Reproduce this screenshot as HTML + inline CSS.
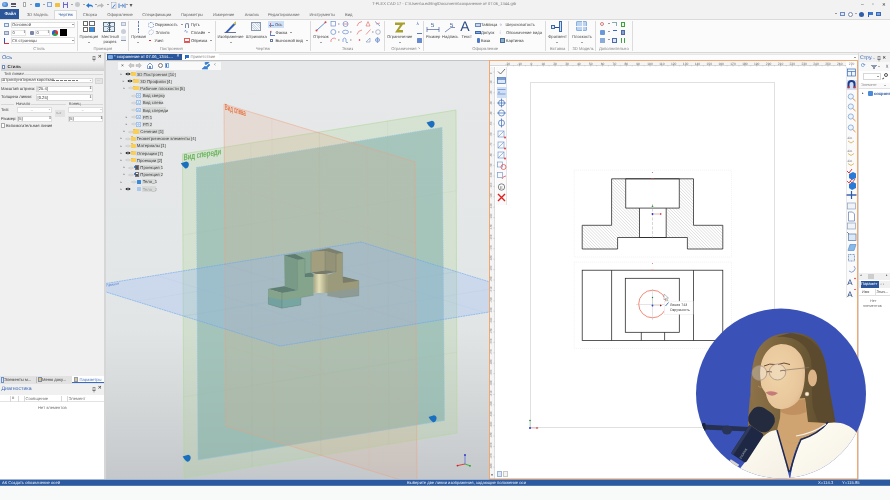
<!DOCTYPE html>
<html><head><meta charset="utf-8">
<style>
*{margin:0;padding:0;box-sizing:border-box}
html,body{width:890px;height:500px;overflow:hidden;background:#f0f0f0;font-family:"Liberation Sans",sans-serif;position:relative}
.a{position:absolute}
.t{position:absolute;white-space:nowrap;font-size:4px;line-height:5px;color:#444}
#root{position:absolute;left:0;top:0;width:890px;height:500px;will-change:transform;text-rendering:geometricPrecision}
</style></head><body><div id="root">
<!-- title bar -->
<div class="a" style="left:0;top:0;width:890px;height:19px;background:#f2f2f2"></div>
<!-- file button -->
<div class="a" style="left:0;top:9px;width:19px;height:10px;background:#2b579a"></div>
<!-- active tab -->
<div class="a" style="left:54px;top:9.5px;width:23px;height:10px;background:#fbfbfb;border:1px solid #dadada;border-bottom:none"></div>
<!-- ribbon -->
<div class="a" style="left:0;top:19px;width:890px;height:34px;background:#fbfbfb;border-top:1px solid #dadada;border-bottom:1px solid #d8d8d8"></div>
<!-- RIBBON START -->
<div class="a" style="left:2px;top:1.5px;width:5.5px;height:5.5px;background:radial-gradient(circle at 40% 40%,#8ec0f0,#1f5fb8);border-radius:50%"></div>
<div class="a" style="left:11px;top:2.5px;width:5px;height:0.8px;background:#556;"></div>
<div class="a" style="left:11px;top:4px;width:5px;height:0.8px;background:#556;"></div>
<div class="a" style="left:11px;top:5.5px;width:5px;height:0.8px;background:#556;"></div>
<div class="a" style="left:22.5px;top:2px;width:3.5px;height:5px;background:#fff;border:0.5px solid #aaa"></div>
<div class="a" style="left:34.5px;top:2.5px;width:5px;height:4.5px;background:#3a8ad8;border-radius:1px"></div>
<div class="a" style="left:46.5px;top:2px;width:5px;height:4.5px;background:#e8eef8;border:0.5px solid #8aa8d8"></div>
<div class="a" style="left:54.5px;top:3px;width:5.5px;height:4px;background:#f0c040;border-radius:0.5px"></div>
<div class="a" style="left:62.5px;top:2px;width:5.5px;height:5.5px;background:#6a68c8;border-radius:0.5px"></div>
<div class="a" style="left:64px;top:2px;width:2.5px;height:2px;background:#e8e8f8;"></div>
<div class="a" style="left:64px;top:5px;width:2.5px;height:2.5px;background:#f0f0f8;"></div>
<div class="a" style="left:74.5px;top:2px;width:5.5px;height:5px;background:#c4c8cc;border-radius:45%"></div>
<div class="a" style="left:29.70px;top:4.10px;width:0;height:0;border-left:1.2px solid transparent;border-right:1.2px solid transparent;border-top:1.32px solid #555"></div>
<div class="a" style="left:42.70px;top:4.10px;width:0;height:0;border-left:1.2px solid transparent;border-right:1.2px solid transparent;border-top:1.32px solid #555"></div>
<div class="a" style="left:70.70px;top:4.10px;width:0;height:0;border-left:1.2px solid transparent;border-right:1.2px solid transparent;border-top:1.32px solid #555"></div>
<div class="a" style="left:82.70px;top:4.10px;width:0;height:0;border-left:1.2px solid transparent;border-right:1.2px solid transparent;border-top:1.32px solid #555"></div>
<div class="a" style="left:94.70px;top:4.10px;width:0;height:0;border-left:1.2px solid transparent;border-right:1.2px solid transparent;border-top:1.32px solid #555"></div>
<div class="a" style="left:106.70px;top:4.10px;width:0;height:0;border-left:1.2px solid transparent;border-right:1.2px solid transparent;border-top:1.32px solid #555"></div>
<div class="a" style="left:125.70px;top:4.10px;width:0;height:0;border-left:1.2px solid transparent;border-right:1.2px solid transparent;border-top:1.32px solid #555"></div>
<svg class="a" style="left:85px;top:1.5px" width="50" height="7"><path d="M1,3.5 L4,1 L4,2.5 Q8,2 8,5.5 Q6.5,3.8 4,4.5 L4,6 Z" fill="#2a78d0"/><path d="M19,3.5 L16,1 L16,2.5 Q12,2 12,5.5 Q13.5,3.8 16,4.5 L16,6 Z" fill="#b8b8b8"/><rect x="26.5" y="0.5" width="4.5" height="6" fill="#eef2f8" stroke="#8a98b0" stroke-width="0.4"/><path d="M27.5,6 L30,2.5" stroke="#2a70c8" stroke-width="0.9"/><rect x="33.5" y="1.5" width="1" height="4.5" fill="#4a80c8"/><path d="M35,3.7 h3.5 M37,2 l2,1.7 l-2,1.7" stroke="#4a80c8" stroke-width="0.8" fill="none"/><rect x="39.5" y="1.5" width="1" height="4.5" fill="#4a80c8"/><path d="M44.5,2 h3 l-1.5,3 z" fill="#555"/></svg>
<div class="t" style="left:372.2px;top:2.23px;font-size:4.06px;line-height:4.87px;color:#7a7a7a;">T-FLEX CAD 17 - C:\Users\a.editing\Documents\сохранение от 07.06_1344.grb</div>
<div class="t" style="left:861px;top:1.65px;font-size:5px;line-height:6.00px;color:#3a3a3a;">–</div>
<div class="t" style="left:872px;top:1.65px;font-size:5px;line-height:6.00px;color:#3a3a3a;">▫</div>
<div class="t" style="left:882px;top:1.96px;font-size:4.5px;line-height:5.40px;color:#3a3a3a;">✕</div>
<div class="t" style="left:4.5px;top:11.18px;font-size:4.3px;line-height:5.16px;color:#fff;"><b>Файл</b></div>
<div class="t" style="left:27px;top:11.58px;font-size:4.15px;line-height:4.98px;color:#666;">3D Модель</div>
<div class="t" style="left:58.5px;top:11.58px;font-size:4.15px;line-height:4.98px;color:#2b579a;">Чертёж</div>
<div class="t" style="left:82.8px;top:11.58px;font-size:4.15px;line-height:4.98px;color:#666;">Сборка</div>
<div class="t" style="left:107.2px;top:11.58px;font-size:4.15px;line-height:4.98px;color:#666;">Оформление</div>
<div class="t" style="left:142.2px;top:11.58px;font-size:4.15px;line-height:4.98px;color:#666;">Спецификации</div>
<div class="t" style="left:180.9px;top:11.58px;font-size:4.15px;line-height:4.98px;color:#666;">Параметры</div>
<div class="t" style="left:212.9px;top:11.58px;font-size:4.15px;line-height:4.98px;color:#666;">Измерение</div>
<div class="t" style="left:244.7px;top:11.58px;font-size:4.15px;line-height:4.98px;color:#666;">Анализ</div>
<div class="t" style="left:268px;top:11.58px;font-size:4.15px;line-height:4.98px;color:#666;">Редактирование</div>
<div class="t" style="left:309.4px;top:11.58px;font-size:4.15px;line-height:4.98px;color:#666;">Инструменты</div>
<div class="t" style="left:345px;top:11.58px;font-size:4.15px;line-height:4.98px;color:#666;">Вид</div>
<div class="a" style="left:835.20px;top:13.40px;width:0;height:0;border-left:1.2px solid transparent;border-right:1.2px solid transparent;border-top:1.32px solid #3a3a3a"></div>
<div class="a" style="left:840px;top:11.5px;width:5px;height:4.5px;background:#dfe8f4;border:0.5px solid #6a8ac0"></div>
<div class="a" style="left:848px;top:11.5px;width:5px;height:5px;background:#fff;border:0.6px solid #7a8aa8;border-radius:50%"></div>
<div class="a" style="left:855.20px;top:13.40px;width:0;height:0;border-left:1.2px solid transparent;border-right:1.2px solid transparent;border-top:1.32px solid #5a5a5a"></div>
<div class="a" style="left:859px;top:11.5px;width:5px;height:5px;background:#2e5ea8;border-radius:50%"></div>
<div class="a" style="left:868px;top:11.5px;width:1px;height:5px;background:#2860c0;"></div>
<div class="a" style="left:869px;top:11.5px;width:4px;height:3px;background:#3a78d0;"></div>
<div class="a" style="left:876px;top:12px;width:5px;height:4px;background:#7aa6e0;border:0.5px solid #3a6ab0"></div>
<div class="a" style="left:76.7px;top:21px;width:0.6px;height:30px;background:#dcdcdc;"></div>
<div class="a" style="left:128.4px;top:21px;width:0.6px;height:30px;background:#dcdcdc;"></div>
<div class="a" style="left:214.5px;top:21px;width:0.6px;height:30px;background:#dcdcdc;"></div>
<div class="a" style="left:309.5px;top:21px;width:0.6px;height:30px;background:#dcdcdc;"></div>
<div class="a" style="left:383.6px;top:21px;width:0.6px;height:30px;background:#dcdcdc;"></div>
<div class="a" style="left:423px;top:21px;width:0.6px;height:30px;background:#dcdcdc;"></div>
<div class="a" style="left:545px;top:21px;width:0.6px;height:30px;background:#dcdcdc;"></div>
<div class="a" style="left:568.4px;top:21px;width:0.6px;height:30px;background:#dcdcdc;"></div>
<div class="a" style="left:595.4px;top:21px;width:0.6px;height:30px;background:#dcdcdc;"></div>
<div class="a" style="left:631.5px;top:21px;width:0.6px;height:30px;background:#dcdcdc;"></div>
<div class="t" style="left:33.3px;top:45.98px;font-size:4.15px;line-height:4.98px;color:#858585;">Стиль</div>
<div class="t" style="left:93.5px;top:45.98px;font-size:4.15px;line-height:4.98px;color:#858585;">Проекция</div>
<div class="t" style="left:159.8px;top:45.98px;font-size:4.15px;line-height:4.98px;color:#858585;">Построения</div>
<div class="t" style="left:255.8px;top:45.98px;font-size:4.15px;line-height:4.98px;color:#858585;">Чертёж</div>
<div class="t" style="left:342px;top:45.98px;font-size:4.15px;line-height:4.98px;color:#858585;">Эскиз</div>
<div class="t" style="left:391.3px;top:45.98px;font-size:4.15px;line-height:4.98px;color:#858585;">Ограничения</div>
<div class="t" style="left:472.3px;top:45.98px;font-size:4.15px;line-height:4.98px;color:#858585;">Оформление</div>
<div class="t" style="left:550px;top:45.98px;font-size:4.15px;line-height:4.98px;color:#858585;">Вставка</div>
<div class="t" style="left:572.5px;top:45.98px;font-size:4.15px;line-height:4.98px;color:#858585;">3D Модель</div>
<div class="t" style="left:598.9px;top:45.98px;font-size:4.15px;line-height:4.98px;color:#858585;">Дополнительно</div>
<div class="t" style="left:417.5px;top:46.38px;font-size:3.5px;line-height:4.20px;color:#999;">↘</div>
<div class="a" style="left:4px;top:22.5px;width:4.5px;height:4.5px;background:#e4ecf6;border:0.5px solid #7a98c8"></div>
<div class="a" style="left:10.5px;top:21.7px;width:64px;height:6.5px;background:#fff;border:0.5px solid #e0e0e0"></div>
<div class="t" style="left:12px;top:22.18px;font-size:4.15px;line-height:4.98px;color:#4a4a4a;">Основной</div>
<div class="a" style="left:72.20px;top:24.40px;width:0;height:0;border-left:1.2px solid transparent;border-right:1.2px solid transparent;border-top:1.32px solid #3a3a3a"></div>
<div class="a" style="left:4px;top:30.5px;width:4.5px;height:4.5px;background:#c8d4e4;border:0.5px solid #8a9ab8"></div>
<div class="a" style="left:11px;top:29.5px;width:15px;height:6.5px;background:#fff;border:0.5px solid #e4e4e4"></div>
<div class="t" style="left:12.5px;top:30.18px;font-size:4.15px;line-height:4.98px;color:#4a4a4a;">0</div>
<div class="t" style="left:23px;top:30.38px;font-size:3.5px;line-height:4.20px;color:#5a5a5a;">⇕</div>
<div class="a" style="left:29.5px;top:31px;width:4px;height:4px;background:#7a86a8;border-radius:1px"></div>
<div class="a" style="left:35px;top:29.5px;width:14.5px;height:6.5px;background:#fff;border:0.5px solid #e4e4e4"></div>
<div class="t" style="left:36.5px;top:30.18px;font-size:4.15px;line-height:4.98px;color:#4a4a4a;">0</div>
<div class="t" style="left:47px;top:30.38px;font-size:3.5px;line-height:4.20px;color:#5a5a5a;">⇕</div>
<div class="a" style="left:52px;top:30px;width:5.5px;height:5.5px;background:conic-gradient(#e03030 0 33%,#30a040 0 66%,#2060d0 0);border-radius:50%"></div>
<div class="a" style="left:59.5px;top:29.4px;width:7px;height:7px;background:#000;"></div>
<div class="a" style="left:4px;top:38px;width:0.7px;height:5px;background:#3050c0;"></div>
<div class="a" style="left:4px;top:42.5px;width:5px;height:0.7px;background:#e03030;"></div>
<div class="a" style="left:10.5px;top:37.4px;width:64px;height:6.9px;background:#fff;border:0.5px solid #e0e0e0"></div>
<div class="t" style="left:12px;top:37.98px;font-size:4.15px;line-height:4.98px;color:#4a4a4a;">СК страницы</div>
<div class="a" style="left:72.20px;top:40.20px;width:0;height:0;border-left:1.2px solid transparent;border-right:1.2px solid transparent;border-top:1.32px solid #3a3a3a"></div>
<div class="a" style="left:83px;top:21.3px;width:5.3px;height:5.1px;background:#fff;border:0.5px solid #6a6a6a"></div>
<div class="a" style="left:89.3px;top:21.3px;width:5.3px;height:5.1px;background:#fff;border:0.5px solid #6a6a6a"></div>
<div class="a" style="left:83px;top:27px;width:5.3px;height:5.1px;background:#fff;border:0.5px solid #6a6a6a"></div>
<div class="a" style="left:89.3px;top:27px;width:5.3px;height:5.1px;background:#fff;border:0.5px solid #6a6a6a"></div>
<div class="a" style="left:89.6px;top:27.3px;width:4.9px;height:4.7px;background:#3a8ad8;border-radius:0.5px"></div>
<div class="t" style="left:79.6px;top:34.18px;font-size:4.15px;line-height:4.98px;color:#4a4a4a;">Проекция</div>
<div class="a" style="left:88.00px;top:42.40px;width:0;height:0;border-left:1.2px solid transparent;border-right:1.2px solid transparent;border-top:1.32px solid #4a4a4a"></div>
<div class="a" style="left:103px;top:21.5px;width:11.7px;height:10px;background:#e4eef4;border:0.5px solid #58707e"></div>
<div class="a" style="left:107px;top:21.5px;width:3.5px;height:10px;background:repeating-linear-gradient(45deg,#8898a8 0 0.4px,transparent 0.4px 1.4px);"></div>
<div class="a" style="left:108.6px;top:21.5px;width:0.5px;height:10px;background:#405868;"></div>
<div class="a" style="left:103px;top:26.3px;width:11.7px;height:0.5px;background:#7890a0;"></div>
<div class="t" style="left:101.5px;top:34.18px;font-size:4.15px;line-height:4.98px;color:#4a4a4a;">Местный</div>
<div class="t" style="left:103.5px;top:38.68px;font-size:4.15px;line-height:4.98px;color:#4a4a4a;">разрез</div>
<div class="a" style="left:120.5px;top:21.5px;width:5px;height:4.5px;background:#dfe6ee;border:0.5px solid #b0bccc"></div>
<div class="a" style="left:120.5px;top:28.5px;width:5px;height:5px;background:#c8d0dc;border-radius:50%"></div>
<div class="a" style="left:120.5px;top:36px;width:5px;height:4.5px;background:#e4e8ee;border-bottom:0.6px solid #8898b0"></div>
<svg class="a" style="left:137px;top:20.5px" width="3" height="12"><line x1="1.5" y1="0" x2="1.5" y2="12" stroke="#3a5a98" stroke-width="0.8" stroke-dasharray="2.5,1"/></svg>
<div class="t" style="left:131.2px;top:34.18px;font-size:4.15px;line-height:4.98px;color:#4a4a4a;">Прямая</div>
<div class="a" style="left:137.20px;top:42.40px;width:0;height:0;border-left:1.2px solid transparent;border-right:1.2px solid transparent;border-top:1.32px solid #4a4a4a"></div>
<div class="a" style="left:148px;top:22px;width:5.5px;height:5.5px;background:transparent;border:0.5px dotted #7a98cc;border-radius:50%"></div>
<div class="t" style="left:154.8px;top:21.98px;font-size:4.15px;line-height:4.98px;color:#3a3a3a;">Окружность</div>
<div class="a" style="left:181.00px;top:24.00px;width:0;height:0;border-left:1.2px solid transparent;border-right:1.2px solid transparent;border-top:1.32px solid #3a3a3a"></div>
<div class="a" style="left:148.3px;top:30.2px;width:5.5px;height:4.5px;background:transparent;border:0.5px dotted #a8b8d8;border-radius:50%;transform:rotate(-40deg)"></div>
<div class="t" style="left:155.5px;top:29.78px;font-size:4.15px;line-height:4.98px;color:#4a4a4a;">Эллипс</div>
<div class="a" style="left:148.5px;top:40px;width:2.5px;height:1px;background:#e03030;"></div>
<div class="t" style="left:154.5px;top:37.78px;font-size:4.15px;line-height:4.98px;color:#3a3a3a;">Узел</div>
<div class="a" style="left:184.5px;top:22.5px;width:4px;height:5px;background:transparent;border:0.6px solid #7a88a0;border-bottom:none;border-radius:2px 2px 0 0"></div>
<div class="t" style="left:190.7px;top:22.18px;font-size:4.15px;line-height:4.98px;color:#3a3a3a;">Путь</div>
<div class="t" style="left:184px;top:28.85px;font-size:5px;line-height:6.00px;color:#3a6ac8;">∿</div>
<div class="t" style="left:190.7px;top:29.78px;font-size:4.15px;line-height:4.98px;color:#3a3a3a;">Сплайн</div>
<div class="a" style="left:207.70px;top:31.80px;width:0;height:0;border-left:1.2px solid transparent;border-right:1.2px solid transparent;border-top:1.32px solid #3a3a3a"></div>
<div class="a" style="left:184px;top:37.8px;width:6px;height:5.5px;background:repeating-linear-gradient(0deg,#e05050 0 0.6px,transparent 0.6px 1.8px);border:0.5px dashed #e06060"></div>
<div class="t" style="left:191px;top:37.78px;font-size:4.15px;line-height:4.98px;color:#3a3a3a;">Обрезка</div>
<div class="a" style="left:209.70px;top:39.80px;width:0;height:0;border-left:1.2px solid transparent;border-right:1.2px solid transparent;border-top:1.32px solid #3a3a3a"></div>
<svg class="a" style="left:224px;top:20.5px" width="13" height="12"><polygon points="1,11.5 9,3 12,0.5 11.5,3.5 3.5,11.5" fill="#3460b8"/><polygon points="9,3 12,0.5 11.5,3.5" fill="#e8c840"/><line x1="0.5" y1="11.5" x2="12" y2="11.5" stroke="#405080" stroke-width="0.8"/></svg>
<div class="t" style="left:217.4px;top:34.18px;font-size:4.15px;line-height:4.98px;color:#4a4a4a;">Изображение</div>
<div class="a" style="left:229.70px;top:42.40px;width:0;height:0;border-left:1.2px solid transparent;border-right:1.2px solid transparent;border-top:1.32px solid #4a4a4a"></div>
<div class="a" style="left:251px;top:22.3px;width:10px;height:8.6px;background:repeating-linear-gradient(45deg,#c8d4e4 0 0.7px,#f4f6fa 0.7px 1.6px);border:0.7px solid #8898b0"></div>
<div class="t" style="left:245.7px;top:34.18px;font-size:4.15px;line-height:4.98px;color:#4a4a4a;">Штриховка</div>
<div class="a" style="left:268px;top:20.8px;width:16px;height:7.3px;background:#cde0f6;"></div>
<div class="a" style="left:270px;top:22.5px;width:0.6px;height:4.5px;background:#e06060;"></div>
<div class="a" style="left:268.5px;top:24.5px;width:5px;height:0.6px;background:#6090d0;"></div>
<div class="t" style="left:275px;top:21.78px;font-size:4.15px;line-height:4.98px;color:#445;">Ось</div>
<div class="a" style="left:269.5px;top:30.5px;width:5px;height:5px;background:transparent;border-left:0.6px solid #6080c0;border-bottom:0.6px solid #6080c0"></div>
<div class="t" style="left:269.5px;top:30.38px;font-size:3.5px;line-height:4.20px;color:#e05050;">✕</div>
<div class="t" style="left:275.5px;top:30.18px;font-size:4.15px;line-height:4.98px;color:#3a3a3a;">Фаска</div>
<div class="a" style="left:289.70px;top:32.20px;width:0;height:0;border-left:1.2px solid transparent;border-right:1.2px solid transparent;border-top:1.32px solid #3a3a3a"></div>
<div class="a" style="left:269.5px;top:38.8px;width:3px;height:3px;background:#fff;border:0.5px solid #6a7a98"></div>
<div class="t" style="left:275.5px;top:38.18px;font-size:4.15px;line-height:4.98px;color:#3a3a3a;">Выносной вид</div>
<div class="a" style="left:305.70px;top:40.20px;width:0;height:0;border-left:1.2px solid transparent;border-right:1.2px solid transparent;border-top:1.32px solid #3a3a3a"></div>
<svg class="a" style="left:315px;top:21px" width="12" height="11"><line x1="1.5" y1="9.5" x2="10.5" y2="1.3" stroke="#3a70d0" stroke-width="0.8"/><circle cx="1.5" cy="9.5" r="1" fill="#e04040"/><circle cx="10.5" cy="1.3" r="1" fill="#e04040"/></svg>
<div class="t" style="left:313px;top:34.18px;font-size:4.15px;line-height:4.98px;color:#4a4a4a;">Отрезок</div>
<div class="a" style="left:319.70px;top:42.40px;width:0;height:0;border-left:1.2px solid transparent;border-right:1.2px solid transparent;border-top:1.32px solid #4a4a4a"></div>
<svg class="a" style="left:330px;top:20px" width="54" height="24" stroke-width="0.6" fill="none"><rect x="1" y="1.5" width="4.5" height="4.5" stroke="#5a7ac8"/><line x1="8" y1="4" x2="9.5" y2="4" stroke="#444"/><circle cx="15.5" cy="4" r="2.5" stroke="#4a7ad0"/><line x1="13" y1="4" x2="18" y2="4" stroke="#e05050"/><path d="M27,6 q1,-4 5,-4.5" stroke="#e05050"/><path d="M36,6 l2,-4.5 l2,4.5 h-4" stroke="#e06060"/><line x1="45" y1="1.5" x2="50" y2="6" stroke="#3a6ac0"/><line x1="46" y1="4" x2="50" y2="3" stroke="#e06060"/><circle cx="3.3" cy="12" r="2.5" stroke="#4a7ad0"/><line x1="8" y1="12" x2="9.5" y2="12" stroke="#444"/><ellipse cx="15.5" cy="12" rx="3" ry="1.8" stroke="#4a7ad0"/><line x1="20" y1="12" x2="21.5" y2="12" stroke="#444"/><path d="M27,14.5 q1,-4 5,-4.5" stroke="#e05050"/><line x1="36" y1="14.5" x2="40.5" y2="9.5" stroke="#e05050"/><line x1="42" y1="12" x2="43.5" y2="12" stroke="#444"/><circle cx="48" cy="12" r="2.3" stroke="#8090b0"/><path d="M1,22 a3,3 0 0 1 5,-3" stroke="#e05050"/><line x1="8" y1="20" x2="9.5" y2="20" stroke="#444"/><path d="M13,22 v-3 q2,-2 3,0 v3 q1,2 2,0" stroke="#4a7ad0"/><line x1="20" y1="20" x2="21.5" y2="20" stroke="#444"/><circle cx="29.5" cy="20" r="0.8" fill="#e03030" stroke="none"/><path d="M36,22 h4 v-4 M36,22 l4,-4" stroke="#7a90c0"/><path d="M47.5,17 v6 M45,20 h5" stroke="#5a80c8"/><circle cx="47.5" cy="20" r="2" stroke="#5a80c8"/></svg>
<svg class="a" style="left:394px;top:21.5px" width="12" height="11"><polygon points="1,3 6,3 1,10.5 9,10.5 9,8 5,8 9,2.5 11,2.5 11,0.5 7,0.5 1,0.5" fill="#a8a02c"/></svg>
<div class="t" style="left:387px;top:34.18px;font-size:4.15px;line-height:4.98px;color:#4a4a4a;">Ограничение</div>
<div class="a" style="left:398.70px;top:42.40px;width:0;height:0;border-left:1.2px solid transparent;border-right:1.2px solid transparent;border-top:1.32px solid #4a4a4a"></div>
<div class="t" style="left:416.5px;top:20.96px;font-size:4.5px;line-height:5.40px;color:#4a6ab0;">⅄</div>
<div class="a" style="left:417px;top:30px;width:5px;height:4px;background:transparent;border-bottom:0.6px solid #5a7ab8"></div>
<div class="a" style="left:416.5px;top:38px;width:5.5px;height:4.5px;background:#6a8ad0;border-radius:0.5px"></div>
<svg class="a" style="left:426px;top:21.5px" width="14" height="11"><text x="5" y="5" font-family="Liberation Sans" font-size="6" fill="#2a4a88">5</text><line x1="1" y1="7.5" x2="13" y2="7.5" stroke="#2a4a88" stroke-width="0.6"/><line x1="1" y1="5" x2="1" y2="10" stroke="#2a4a88" stroke-width="0.6"/><line x1="13" y1="5" x2="13" y2="10" stroke="#2a4a88" stroke-width="0.6"/></svg>
<div class="t" style="left:426px;top:34.18px;font-size:4.15px;line-height:4.98px;color:#4a4a4a;">Размер</div>
<svg class="a" style="left:444px;top:21.5px" width="12" height="11"><text x="6" y="5" font-family="Liberation Sans" font-size="6" fill="#2a4a88">5</text><line x1="1" y1="10" x2="7" y2="5.5" stroke="#2a4a88" stroke-width="0.6"/><line x1="7" y1="5.5" x2="11" y2="5.5" stroke="#2a4a88" stroke-width="0.6"/></svg>
<div class="t" style="left:442px;top:34.18px;font-size:4.15px;line-height:4.98px;color:#4a4a4a;">Надпись</div>
<div class="t" style="left:460.3px;top:18.27px;font-size:14px;line-height:16.80px;color:#2a4a88;">A</div>
<div class="t" style="left:461.5px;top:34.18px;font-size:4.15px;line-height:4.98px;color:#4a4a4a;">Текст</div>
<div class="a" style="left:475px;top:22.7px;width:5.5px;height:4.2px;background:#c8d8ee;border:0.5px solid #6a8ac0"></div>
<div class="t" style="left:481px;top:21.98px;font-size:4.15px;line-height:4.98px;color:#3a3a3a;">Таблица</div>
<div class="a" style="left:475px;top:30.5px;width:5.5px;height:3px;background:#8ab0e0;border:0.5px solid #3a6ab0"></div>
<div class="t" style="left:481px;top:29.98px;font-size:4.15px;line-height:4.98px;color:#3a3a3a;">Допуск</div>
<div class="a" style="left:477px;top:37.8px;width:2.5px;height:5px;background:#4a7ac8;border-radius:1px"></div>
<div class="t" style="left:481px;top:37.98px;font-size:4.15px;line-height:4.98px;color:#3a3a3a;">База</div>
<div class="t" style="left:499.5px;top:21.56px;font-size:4.5px;line-height:5.40px;color:#7a90c8;">⩒</div>
<div class="t" style="left:505.5px;top:21.98px;font-size:4.15px;line-height:4.98px;color:#4a4a4a;">Шероховатость</div>
<div class="t" style="left:499.5px;top:29.56px;font-size:4.5px;line-height:5.40px;color:#5a7ab8;">⫶</div>
<div class="t" style="left:506px;top:29.98px;font-size:4.15px;line-height:4.98px;color:#4a4a4a;">Обозначение вида</div>
<div class="a" style="left:500px;top:38px;width:5px;height:5px;background:#8ab0c8;border:0.5px solid #4a6a98"></div>
<div class="t" style="left:506px;top:37.98px;font-size:4.15px;line-height:4.98px;color:#3a3a3a;">Картинка</div>
<div class="a" style="left:551px;top:24.5px;width:4px;height:4.5px;background:#dde8f4;border:0.6px solid #3a6ab0"></div>
<div class="a" style="left:555px;top:26.5px;width:3.5px;height:0.7px;background:#2a4a88;"></div>
<div class="a" style="left:558.5px;top:21.4px;width:3.5px;height:10.8px;background:#cfe0f4;border:0.6px solid #3a6ab0"></div>
<div class="t" style="left:548.2px;top:34.18px;font-size:4.15px;line-height:4.98px;color:#4a4a4a;">Фрагмент</div>
<div class="a" style="left:555.70px;top:42.40px;width:0;height:0;border-left:1.2px solid transparent;border-right:1.2px solid transparent;border-top:1.32px solid #4a4a4a"></div>
<div class="a" style="left:576px;top:21.4px;width:11.3px;height:10.1px;background:#bcd4f0;border:0.7px solid #8ab0e0;border-radius:1px"></div>
<div class="a" style="left:581.5px;top:21.4px;width:0.7px;height:10.1px;background:#f4f8fc;"></div>
<div class="a" style="left:576px;top:26.2px;width:11.3px;height:0.7px;background:#f4f8fc;"></div>
<div class="t" style="left:572px;top:34.18px;font-size:4.15px;line-height:4.98px;color:#4a4a4a;">Плоскость</div>
<div class="a" style="left:580.70px;top:42.40px;width:0;height:0;border-left:1.2px solid transparent;border-right:1.2px solid transparent;border-top:1.32px solid #4a4a4a"></div>
<div class="a" style="left:600px;top:22px;width:4px;height:4px;background:transparent;border:0.5px solid #d08080;border-radius:50%"></div>
<div class="a" style="left:607.70px;top:23.40px;width:0;height:0;border-left:1.2px solid transparent;border-right:1.2px solid transparent;border-top:1.32px solid #3a3a3a"></div>
<div class="a" style="left:612px;top:22px;width:5px;height:4px;background:transparent;border-top:0.5px solid #8aa;border-right:0.5px solid #8aa"></div>
<div class="a" style="left:620.5px;top:22px;width:4px;height:4.5px;background:#e8f4e8;border:0.5px solid #40a040"></div>
<div class="a" style="left:600px;top:30px;width:5px;height:4.5px;background:#6a98d8;border-radius:1px"></div>
<div class="a" style="left:607.70px;top:31.40px;width:0;height:0;border-left:1.2px solid transparent;border-right:1.2px solid transparent;border-top:1.32px solid #3a3a3a"></div>
<div class="a" style="left:613px;top:30px;width:4px;height:3.5px;background:transparent;border-top:0.6px solid #3a6ac0"></div>
<div class="a" style="left:620.5px;top:30px;width:4px;height:4.5px;background:#8aa0c8;border:0.5px solid #4a6aa8"></div>
<div class="a" style="left:600px;top:38px;width:5px;height:4.5px;background:#8aaad8;"></div>
<div class="a" style="left:607.70px;top:39.40px;width:0;height:0;border-left:1.2px solid transparent;border-right:1.2px solid transparent;border-top:1.32px solid #3a3a3a"></div>
<div class="a" style="left:612px;top:38px;width:4.5px;height:4.5px;background:#dde8f4;border:0.5px solid #4a6ab0"></div>
<div class="a" style="left:620.5px;top:38px;width:4.5px;height:4.5px;background:transparent;border-left:0.8px solid #40a040;border-right:0.8px solid #40a040"></div>
<!-- RIBBON END -->
<!-- left panel -->
<div class="a" style="left:0;top:53px;width:105px;height:426px;background:#f0f0f0"></div>
<div class="a" style="left:104px;top:53px;width:2px;height:426px;background:#d6d6d6"></div>
<!-- LEFT START -->
<div class="a" style="left:0px;top:53px;width:104px;height:10px;background:#f0f0f0;"></div>
<div class="t" style="left:2px;top:54.58px;font-size:5.6px;line-height:6.72px;color:#3a6ab8;">Ось</div>
<svg class="a" style="left:91.5px;top:55.5px" width="4" height="6"><rect x="1" y="0.3" width="2" height="3" fill="none" stroke="#555" stroke-width="0.5"/><line x1="0.3" y1="3.4" x2="3.7" y2="3.4" stroke="#555" stroke-width="0.5"/><line x1="2" y1="3.4" x2="2" y2="5.5" stroke="#555" stroke-width="0.5"/></svg>
<div class="t" style="left:97.8px;top:55.07px;font-size:4.8px;line-height:5.76px;color:#222;">✕</div>
<div class="a" style="left:0.5px;top:63px;width:103.5px;height:7.5px;background:linear-gradient(180deg,#ececec,#cfcfcf);"></div>
<div class="a" style="left:2px;top:64.5px;width:3px;height:4px;background:#fff;border:0.5px solid #6a8ac0"></div>
<div class="t" style="left:7.5px;top:64.02px;font-size:4.4px;line-height:5.28px;color:#333;"><b>Стиль</b></div>
<div class="t" style="left:4px;top:71.18px;font-size:4.15px;line-height:4.98px;color:#4a4a4a;">Тип линии</div>
<div class="a" style="left:23px;top:74px;width:80px;height:0.5px;background:#d8d8d8;"></div>
<div class="a" style="left:0.5px;top:77.5px;width:92px;height:5.4px;background:#fff;border:0.5px solid #dadada"></div>
<div class="t" style="left:1.5px;top:77.48px;font-size:4.15px;line-height:4.98px;color:#3a3a3a;">Штрихпунктирная короткая</div>
<div class="a" style="left:52px;top:80px;width:26px;height:0.7px;background:repeating-linear-gradient(90deg,#777 0 3px,transparent 3px 4px);"></div>
<div class="t" style="left:89px;top:77.68px;font-size:3.5px;line-height:4.20px;color:#4a4a4a;">⌄</div>
<div class="a" style="left:94.5px;top:77.5px;width:8.5px;height:6px;background:#e4e4e4;border:0.5px solid #d4d4d4"></div>
<div class="t" style="left:97px;top:78.08px;font-size:3.5px;line-height:4.20px;color:#5a5a5a;">...</div>
<div class="t" style="left:1px;top:85.98px;font-size:4.15px;line-height:4.98px;color:#3a3a3a;">Масштаб штриха:</div>
<div class="a" style="left:36px;top:85.5px;width:56.5px;height:6.5px;background:#fff;border:0.5px solid #dadada"></div>
<div class="t" style="left:37.5px;top:85.98px;font-size:4.15px;line-height:4.98px;color:#3a3a3a;">[25.4]</div>
<div class="t" style="left:89px;top:85.99px;font-size:3.8px;line-height:4.56px;color:#4a4a4a;">⇕</div>
<div class="t" style="left:1px;top:94.18px;font-size:4.15px;line-height:4.98px;color:#3a3a3a;">Толщина линии:</div>
<div class="a" style="left:36px;top:94.3px;width:56.5px;height:6.3px;background:#fff;border:0.5px solid #dadada"></div>
<div class="t" style="left:37.5px;top:94.58px;font-size:4.15px;line-height:4.98px;color:#3a3a3a;">[0.25]</div>
<div class="t" style="left:89px;top:94.59px;font-size:3.8px;line-height:4.56px;color:#4a4a4a;">⇕</div>
<div class="a" style="left:1px;top:103.5px;width:13px;height:0.5px;background:#d8d8d8;"></div>
<div class="t" style="left:16px;top:100.58px;font-size:4.15px;line-height:4.98px;color:#4a4a4a;">Начало</div>
<div class="a" style="left:31px;top:103.5px;width:35px;height:0.5px;background:#d8d8d8;"></div>
<div class="t" style="left:69px;top:100.58px;font-size:4.15px;line-height:4.98px;color:#4a4a4a;">Конец</div>
<div class="a" style="left:81px;top:103.5px;width:22px;height:0.5px;background:#d8d8d8;"></div>
<div class="t" style="left:1px;top:107.18px;font-size:4.15px;line-height:4.98px;color:#3a3a3a;">Тип:</div>
<div class="a" style="left:16.5px;top:107.2px;width:35px;height:5.6px;background:#fff;border:0.5px solid #dedede"></div>
<div class="t" style="left:30px;top:107.58px;font-size:3.5px;line-height:4.20px;color:#aaa;">→</div>
<div class="t" style="left:48px;top:107.38px;font-size:3.5px;line-height:4.20px;color:#5a5a5a;">⌄</div>
<div class="a" style="left:54.5px;top:110px;width:10.5px;height:7px;background:#e2e2e2;"></div>
<div class="t" style="left:56px;top:111.08px;font-size:3.5px;line-height:4.20px;color:#5a5a5a;">&lt;-&gt;</div>
<div class="a" style="left:67.5px;top:107.2px;width:35.5px;height:5.6px;background:#fff;border:0.5px solid #dedede"></div>
<div class="t" style="left:81px;top:107.58px;font-size:3.5px;line-height:4.20px;color:#aaa;">←</div>
<div class="t" style="left:99.5px;top:107.38px;font-size:3.5px;line-height:4.20px;color:#5a5a5a;">⌄</div>
<div class="t" style="left:1px;top:115.78px;font-size:4.15px;line-height:4.98px;color:#3a3a3a;">Размер:</div>
<div class="a" style="left:16.5px;top:115.5px;width:35px;height:6px;background:#fff;border:0.5px solid #dedede"></div>
<div class="t" style="left:18px;top:115.78px;font-size:4.15px;line-height:4.98px;color:#3a3a3a;">[5]</div>
<div class="t" style="left:48.5px;top:115.79px;font-size:3.8px;line-height:4.56px;color:#4a4a4a;">⇕</div>
<div class="a" style="left:67.5px;top:115.5px;width:35.5px;height:6px;background:#fff;border:0.5px solid #dedede"></div>
<div class="t" style="left:69px;top:115.78px;font-size:4.15px;line-height:4.98px;color:#3a3a3a;">[5]</div>
<div class="t" style="left:100px;top:115.79px;font-size:3.8px;line-height:4.56px;color:#4a4a4a;">⇕</div>
<div class="a" style="left:0.5px;top:123px;width:4.5px;height:5px;background:#fff;border:0.5px solid #aaa"></div>
<div class="t" style="left:6px;top:122.98px;font-size:4.15px;line-height:4.98px;color:#3a3a3a;">Вспомогательная линия</div>
<div class="a" style="left:0px;top:376px;width:104px;height:8px;background:#e2e2e2;"></div>
<div class="a" style="left:1px;top:377px;width:2.5px;height:5.5px;background:#dfe8f4;border:0.5px solid #6a90c8"></div>
<div class="t" style="left:4px;top:377.38px;font-size:4.15px;line-height:4.98px;color:#3a3a3a;">Элементы м...</div>
<div class="a" style="left:35.5px;top:377px;width:0.5px;height:6px;background:#bbb;"></div>
<div class="a" style="left:37.5px;top:376.8px;width:4px;height:5.5px;background:#f0c850;border:0.5px solid #7a8ab8"></div>
<div class="t" style="left:42px;top:377.38px;font-size:4.15px;line-height:4.98px;color:#3a3a3a;">Меню доку...</div>
<div class="a" style="left:72px;top:376px;width:32px;height:7.4px;background:#fff;border-bottom:0.8px solid #3a6ac0"></div>
<div class="a" style="left:73.5px;top:377px;width:4.5px;height:5px;background:#e8c860;border:0.5px solid #8a9ac0"></div>
<div class="t" style="left:79.5px;top:377.38px;font-size:4.15px;line-height:4.98px;color:#4a78c8;">Параметры</div>
<div class="a" style="left:0px;top:384px;width:104px;height:10px;background:#f0f0f0;"></div>
<div class="t" style="left:1.5px;top:385.83px;font-size:5.2px;line-height:6.24px;color:#3a6ab8;">Диагностика</div>
<svg class="a" style="left:91.8px;top:386.5px" width="4" height="6"><rect x="1" y="0.3" width="2" height="3" fill="none" stroke="#555" stroke-width="0.5"/><line x1="0.3" y1="3.4" x2="3.7" y2="3.4" stroke="#555" stroke-width="0.5"/><line x1="2" y1="3.4" x2="2" y2="5.5" stroke="#555" stroke-width="0.5"/></svg>
<div class="t" style="left:97.8px;top:385.97px;font-size:4.8px;line-height:5.76px;color:#222;">✕</div>
<div class="a" style="left:0px;top:394.5px;width:104px;height:7.8px;background:#fff;border-bottom:0.5px solid #e4e4e4"></div>
<div class="a" style="left:9.5px;top:395.5px;width:0.5px;height:6px;background:#d8d8d8;"></div>
<div class="a" style="left:17.5px;top:395.5px;width:0.5px;height:6px;background:#d8d8d8;"></div>
<div class="a" style="left:23.5px;top:395.5px;width:0.5px;height:6px;background:#d8d8d8;"></div>
<div class="a" style="left:60.5px;top:395.5px;width:0.5px;height:6px;background:#d8d8d8;"></div>
<div class="a" style="left:67px;top:395.5px;width:0.5px;height:6px;background:#d8d8d8;"></div>
<div class="t" style="left:12px;top:395.77px;font-size:4px;line-height:4.80px;color:#5a5a5a;">#</div>
<div class="t" style="left:25.5px;top:395.68px;font-size:4.15px;line-height:4.98px;color:#707070;">Сообщение</div>
<div class="t" style="left:68.5px;top:395.68px;font-size:4.15px;line-height:4.98px;color:#707070;">Элемент</div>
<div class="a" style="left:0px;top:402.3px;width:104px;height:76.7px;background:#fff;"></div>
<div class="t" style="left:38px;top:405.18px;font-size:4.15px;line-height:4.98px;color:#707070;">Нет элементов</div>
<!-- LEFT END -->
<!-- 3D view -->
<div class="a" style="left:106px;top:60px;width:384px;height:419px;background:linear-gradient(180deg,#e7e8e9 0%,#e4e7e7 45%,#e1e5e6 64%,#d4d8d9 81%,#c4c8cb 100%)"></div>

<!-- 3D scene -->
<svg class="a" style="left:0;top:0" width="890" height="500" viewBox="0 0 890 500">
<defs><clipPath id="c3"><rect x="106" y="60" width="383" height="419"/></clipPath>
<linearGradient id="cyl" x1="0" x2="1" y1="0" y2="0"><stop offset="0" stop-color="#a9a784"/><stop offset="0.4" stop-color="#e2dfb8"/><stop offset="1" stop-color="#9d9a78"/></linearGradient>
</defs>
<g clip-path="url(#c3)">
<!-- green outer plane -->
<polygon points="182.5,154 456,110 457,433 184,478" fill="#a8d090" fill-opacity="0.25" stroke="#b0d8a0" stroke-width="0.6"/>
<!-- inner teal -->
<polygon points="196.5,167.5 442,127.5 444.5,420.5 198,460" fill="#75aaa5" fill-opacity="0.5" stroke="#98c4e0" stroke-width="0.8" stroke-dasharray="1.4,0.9"/>
<!-- orange plane -->
<polygon points="224,104 415,162 417,485 226,426" fill="#e0a888" fill-opacity="0.2" stroke="#f0a080" stroke-width="0.6" stroke-opacity="0.8"/>
<!-- GRID START --><line x1="250.9" y1="143.0" x2="252.2" y2="466.8" stroke="#9ab890" stroke-opacity="0.22" stroke-width="0.5"/><line x1="182.9" y1="235.0" x2="456.2" y2="190.8" stroke="#9ab890" stroke-opacity="0.22" stroke-width="0.5"/><line x1="319.2" y1="132.0" x2="320.5" y2="455.5" stroke="#9ab890" stroke-opacity="0.22" stroke-width="0.5"/><line x1="183.2" y1="316.0" x2="456.5" y2="271.5" stroke="#9ab890" stroke-opacity="0.22" stroke-width="0.5"/><line x1="387.6" y1="121.0" x2="388.8" y2="444.2" stroke="#9ab890" stroke-opacity="0.22" stroke-width="0.5"/><line x1="183.6" y1="397.0" x2="456.8" y2="352.2" stroke="#9ab890" stroke-opacity="0.22" stroke-width="0.5"/><line x1="271.8" y1="118.5" x2="273.8" y2="440.8" stroke="#e0a090" stroke-opacity="0.22" stroke-width="0.5"/><line x1="224.5" y1="184.5" x2="415.5" y2="242.8" stroke="#e0a090" stroke-opacity="0.22" stroke-width="0.5"/><line x1="319.5" y1="133.0" x2="321.5" y2="455.5" stroke="#e0a090" stroke-opacity="0.22" stroke-width="0.5"/><line x1="225.0" y1="265.0" x2="416.0" y2="323.5" stroke="#e0a090" stroke-opacity="0.22" stroke-width="0.5"/><line x1="367.2" y1="147.5" x2="369.2" y2="470.2" stroke="#e0a090" stroke-opacity="0.22" stroke-width="0.5"/><line x1="225.5" y1="345.5" x2="416.5" y2="404.2" stroke="#e0a090" stroke-opacity="0.22" stroke-width="0.5"/><line x1="156.2" y1="275.3" x2="348.2" y2="334.9" stroke="#8ab0e0" stroke-opacity="0.2" stroke-width="0.5"/><line x1="136.0" y1="301.3" x2="409.0" y2="256.9" stroke="#8ab0e0" stroke-opacity="0.2" stroke-width="0.5"/><line x1="224.5" y1="264.2" x2="416.5" y2="323.8" stroke="#8ab0e0" stroke-opacity="0.2" stroke-width="0.5"/><line x1="184.0" y1="316.2" x2="457.0" y2="271.8" stroke="#8ab0e0" stroke-opacity="0.2" stroke-width="0.5"/><line x1="292.8" y1="253.1" x2="484.8" y2="312.7" stroke="#8ab0e0" stroke-opacity="0.2" stroke-width="0.5"/><line x1="232.0" y1="331.1" x2="505.0" y2="286.7" stroke="#8ab0e0" stroke-opacity="0.2" stroke-width="0.5"/><!-- GRID END -->
<!-- blue plane -->
<polygon points="88,286.4 361,242 553,301.6 280,346" fill="#88b1fb" fill-opacity="0.25" stroke="#6aa6ee" stroke-width="0.6" stroke-dasharray="2,0.6"/><text x="0" y="0" transform="matrix(0.95 -0.155 0 1 106.5 286.5)" font-family="Liberation Sans" font-size="3.2" fill="#4a7ad0">Горизонт</text>
</g>
<!-- 3D part -->
<g>
<polygon points="295,254 311,251.5 311,272.5 305,273.5 305,258.6" fill="#86a894"/>
<polygon points="284.2,255.4 297.4,259.8 297.6,290.2 284.7,286.3" fill="#7a9a88"/>
<polygon points="297.4,259.8 305,258.6 305,277 313.5,275.5 313.5,295.3 301,297.5 301,305 281.9,308.2 281.9,293 297.6,290.2" fill="#84a48c"/>
<polygon points="284.2,255.4 295,254 305,258.6 297.4,259.8" fill="#5d7c6e"/>
<polygon points="305,273.5 311,272.5 314,274.5 313.5,277 305,277" fill="#5f7f73"/>
<polygon points="268.4,289.1 284.7,286.3 297.6,290.2 281.9,293" fill="#5f7f72"/>
<polygon points="268.4,289.1 281.9,293 281.9,308.2 268.4,304.3" fill="#86a48c"/>
<polygon points="268.4,297 281.9,300 281.9,308.2 268.4,304.3" fill="#72a1a0"/>
<polygon points="281.9,300 301,298 301,305 281.9,308.2" fill="#77a5a2"/>
<line x1="281.9" y1="293" x2="281.9" y2="308.2" stroke="#5a7a70" stroke-width="0.4"/>
<polygon points="311,251.5 325,251 325,270.5 311,272.5" fill="#a29e7e"/>
<polygon points="325,251 336,254 336,272 325,270.5" fill="#949277"/>
<polygon points="336,254 342.6,252.6 342.6,277 358.8,280.7 358.8,288.5 327.4,293 327.4,275 336,272" fill="#9b9a7a"/>
<polygon points="311,251.5 329,248.2 342.6,252.6 336,254 325,251" fill="#7e806c"/>
<polygon points="311,272.5 325,270.5 336,272 320,275" fill="#777a66"/>
<polygon points="342.6,277 344,276.7 358.8,280.7 343,283" fill="#7b7d6b"/>
<polygon points="327.4,292.5 358.8,288 358.8,295.8 339.7,298 327.4,296" fill="#8e9b94"/>
<rect x="313.5" y="274" width="14" height="19" fill="url(#cyl)"/>
<line x1="297.4" y1="259.8" x2="297.6" y2="290.2" stroke="#617f70" stroke-width="0.4"/>
<line x1="336" y1="254" x2="336" y2="272" stroke="#6f705e" stroke-width="0.4"/>
</g>
<!-- markers -->
<g stroke="#4a5a50" stroke-opacity="0.5" stroke-width="0.35" fill="none"><path d="M284.2,255.4 L329,248.2 L342.6,252.6 L342.6,277 L358.8,280.7 L358.8,295.8 L339.7,298"/><path d="M268.4,289.1 L284.7,286.3 M268.4,289.1 L268.4,304.3 L281.9,308.2 L301,305 L301,297.5 L313.5,295.3"/><path d="M297.4,259.8 L305,258.6 L305,277 M311,251.5 L311,272.5 M325,251 L325,270.5 L336,272 M336,254 L342.6,252.6"/></g>
<!-- markers --><path transform="translate(426.5,120.8)" d="M0,1.7 L5.5,0 Q8.5,0.7 8,3.7 Q7,7.2 4.5,7 Q2,5.2 0,1.7 Z" fill="#1a6fbf"/><path transform="translate(180.8,161.6)" d="M0,1.7 L5.5,0 Q8.5,0.7 8,3.7 Q7,7.2 4.5,7 Q2,5.2 0,1.7 Z" fill="#1a6fbf"/><path transform="translate(182.6,454.8)" d="M0,1.7 L5.5,0 Q8.5,0.7 8,3.7 Q7,7.2 4.5,7 Q2,5.2 0,1.7 Z" fill="#1a6fbf"/><path transform="translate(428.5,415.2)" d="M0,1.7 L5.5,0 Q8.5,0.7 8,3.7 Q7,7.2 4.5,7 Q2,5.2 0,1.7 Z" fill="#1a6fbf"/>
<!-- labels -->
<text x="0" y="0" transform="matrix(0.764 -0.122 0 1 183.5 160.2)" font-family="Liberation Sans" font-size="8.3" fill="#5aae48" stroke="#5aae48" stroke-width="0.15">Вид спереди</text>
<text x="0" y="0" transform="matrix(0.526 0.16 0 1 224.8 109.6)" font-family="Liberation Sans" font-size="8.3" fill="#e8703e" stroke="#e8703e" stroke-width="0.15">Вид слева</text>
<!-- axis -->
<g stroke-width="1"><line x1="465" y1="464" x2="465" y2="455" stroke="#7080e0"/><circle cx="465" cy="455" r="0.9" fill="#2030c0"/><line x1="465" y1="464" x2="457.5" y2="465.6" stroke="#e04040"/><circle cx="457.5" cy="465.6" r="0.9" fill="#d02020"/><line x1="465" y1="464" x2="470" y2="465.8" stroke="#40b040"/><circle cx="470" cy="465.8" r="0.9" fill="#20a020"/></g>
</svg>

<!-- doc tabs -->
<div class="a" style="left:106px;top:53.5px;width:752px;height:7px;background:#fdfdfd;border-top:0.5px solid #e8e8e8;border-bottom:0.7px solid #c4c4c4"></div>
<div class="a" style="left:107px;top:54px;width:75px;height:6px;background:#2b579a"></div>
<div class="a" style="left:108px;top:54.6px;width:5px;height:4.8px;background:#7aa9e0;border-radius:1px"></div>
<div class="t" style="left:114px;top:54.3px;font-size:4.2px;line-height:5.6px;color:#fff">* сохранение от 07.06_1344....</div>
<div class="t" style="left:176.5px;top:54.3px;font-size:5px;line-height:5.6px;color:#fff">×</div>
<div class="a" style="left:183px;top:54px;width:36px;height:6px;background:#fff"></div>
<div class="a" style="left:185px;top:55px;width:1px;height:4px;background:#2060c0"></div>
<div class="a" style="left:186px;top:55px;width:3px;height:2.5px;background:#2a70d0"></div>
<div class="t" style="left:190.5px;top:54.3px;font-size:4.2px;line-height:5.6px;color:#8a8a8a">Приветствие</div>
<!-- tree toolbar -->
<div class="a" style="left:118px;top:61.5px;width:103px;height:8px;background:rgba(255,255,255,0.75)"></div>
<div class="t" style="left:121px;top:62.5px;font-size:5px;line-height:6px;color:#333">×</div>
<svg class="a" style="left:128px;top:62px" width="50" height="7"><path d="M0.5,3.5 L3,1 V2.5 H6 V4.5 H3 V6 Z" fill="#c8c8c8" stroke="#999" stroke-width="0.3"/><path d="M13.5,3.5 L11,1 V2.5 H8 V4.5 H11 V6 Z" fill="#c8c8c8" stroke="#999" stroke-width="0.3"/><path d="M19.5,3.5 L22,1 L24.5,3.5 V6.5 H19.5 Z" fill="#fff" stroke="#2a60b0" stroke-width="0.6"/><rect x="21.3" y="4" width="1.4" height="2.5" fill="#2a60b0"/></svg>

<div class="a" style="left:157.5px;top:62.8px;width:5px;height:5px;border:0.6px solid #777;border-radius:50%"></div>
<div class="a" style="left:164.8px;top:62.8px;width:4.2px;height:5px;border:0.5px solid #8ab0e0;background:#f0f6fc"></div><div class="a" style="left:166.4px;top:64px;width:1px;height:2.5px;background:#3a70c0"></div>
<svg class="a" style="left:200.5px;top:61.5px" width="10" height="8"><path d="M1,7 L4,4 L5,5 L8,2 L9,3 L6,6 L7,7 Z M5,3 a2,2 0 1 1 3,-2" fill="#3a80d0" stroke="#3a80d0" stroke-width="0.6"/></svg>
<div class="t" style="left:214px;top:62.2px;font-size:6px;line-height:7px;color:#777">‹</div>
<!-- TREE START -->
<div class="a" style="left:135.8px;top:71.4px;width:38.5px;height:5.2px;background:rgba(200,200,200,0.45)"></div>
<div class="t" style="left:136.8px;top:71.5px;font-size:4.3px;line-height:5.2px;color:#3c3c3c">3D Построения [10]</div>
<div class="t" style="left:120.5px;top:71.6px;font-size:3px;line-height:5px;color:#777">▸</div>
<svg class="a" style="left:124.5px;top:72.0px" width="6" height="4"><path d="M0.3,2 Q3,-0.6 5.7,2 Q3,4.6 0.3,2Z" fill="#1a1a1a"/><circle cx="3" cy="2" r="0.7" fill="#fff"/></svg>
<div class="a" style="left:130.5px;top:71.9px;width:5.6px;height:4.2px;background:#f8cf5a;border-radius:0.4px"></div>
<div class="a" style="left:130.5px;top:71.5px;width:2.4px;height:1px;background:#f0c040"></div>
<div class="a" style="left:139.3px;top:78.6px;width:30.5px;height:5.2px;background:rgba(200,200,200,0.45)"></div>
<div class="t" style="left:140.3px;top:78.7px;font-size:4.3px;line-height:5.2px;color:#3c3c3c">3D Профили [4]</div>
<div class="t" style="left:122.7px;top:78.8px;font-size:3px;line-height:5px;color:#777">▸</div>
<svg class="a" style="left:127.3px;top:79.2px" width="6" height="4"><path d="M0.3,2 Q3,-0.6 5.7,2 Q3,4.6 0.3,2Z" fill="#1a1a1a"/><circle cx="3" cy="2" r="0.7" fill="#fff"/></svg>
<div class="a" style="left:133.0px;top:79.1px;width:5.6px;height:4.2px;background:#f8cf5a;border-radius:0.4px"></div>
<div class="a" style="left:133.0px;top:78.7px;width:2.4px;height:1px;background:#f0c040"></div>
<div class="a" style="left:139.3px;top:85.8px;width:44.5px;height:5.2px;background:rgba(200,200,200,0.45)"></div>
<div class="t" style="left:140.3px;top:85.9px;font-size:4.3px;line-height:5.2px;color:#3c3c3c">Рабочие плоскости [5]</div>
<div class="t" style="left:123.4px;top:86.0px;font-size:3px;line-height:5px;color:#777">▸</div>
<svg class="a" style="left:127.8px;top:86.4px" width="6" height="4"><path d="M0.5,2 Q3,0 5.5,2 Q3,4 0.5,2Z" fill="none" stroke="#b8b8b8" stroke-width="0.45"/></svg>
<div class="a" style="left:133.0px;top:86.3px;width:5.6px;height:4.2px;background:#f8cf5a;border-radius:0.4px"></div>
<div class="a" style="left:133.0px;top:85.9px;width:2.4px;height:1px;background:#f0c040"></div>
<div class="a" style="left:141.7px;top:93.0px;width:22.5px;height:5.2px;background:rgba(200,200,200,0.45)"></div>
<div class="t" style="left:142.7px;top:93.1px;font-size:4.3px;line-height:5.2px;color:#3c3c3c">Вид сверху</div>
<svg class="a" style="left:130.5px;top:93.6px" width="6" height="4"><path d="M0.5,2 Q3,0 5.5,2 Q3,4 0.5,2Z" fill="none" stroke="#b8b8b8" stroke-width="0.45"/></svg>
<div class="a" style="left:135.6px;top:93.2px;width:5.8px;height:4.8px;background:#e4eefa;border:0.5px solid #a0c0e8"></div>
<div class="a" style="left:138.2px;top:93.2px;width:0.5px;height:4.8px;background:#b0cdf0"></div>
<div class="a" style="left:135.6px;top:95.4px;width:5.8px;height:0.5px;background:#b0cdf0"></div>
<div class="a" style="left:141.7px;top:100.2px;width:20.5px;height:5.2px;background:rgba(200,200,200,0.45)"></div>
<div class="t" style="left:142.7px;top:100.3px;font-size:4.3px;line-height:5.2px;color:#3c3c3c">Вид слева</div>
<svg class="a" style="left:130.5px;top:100.8px" width="6" height="4"><path d="M0.5,2 Q3,0 5.5,2 Q3,4 0.5,2Z" fill="none" stroke="#b8b8b8" stroke-width="0.45"/></svg>
<div class="a" style="left:135.6px;top:100.4px;width:5.8px;height:4.8px;background:#e4eefa;border:0.5px solid #a0c0e8"></div>
<div class="a" style="left:138.2px;top:100.4px;width:0.5px;height:4.8px;background:#b0cdf0"></div>
<div class="a" style="left:135.6px;top:102.6px;width:5.8px;height:0.5px;background:#b0cdf0"></div>
<div class="a" style="left:141.7px;top:107.4px;width:24.5px;height:5.2px;background:rgba(200,200,200,0.45)"></div>
<div class="t" style="left:142.7px;top:107.5px;font-size:4.3px;line-height:5.2px;color:#3c3c3c">Вид спереди</div>
<svg class="a" style="left:130.5px;top:108.0px" width="6" height="4"><path d="M0.5,2 Q3,0 5.5,2 Q3,4 0.5,2Z" fill="none" stroke="#b8b8b8" stroke-width="0.45"/></svg>
<div class="a" style="left:135.6px;top:107.6px;width:5.8px;height:4.8px;background:#e4eefa;border:0.5px solid #a0c0e8"></div>
<div class="a" style="left:138.2px;top:107.6px;width:0.5px;height:4.8px;background:#b0cdf0"></div>
<div class="a" style="left:135.6px;top:109.8px;width:5.8px;height:0.5px;background:#b0cdf0"></div>
<div class="a" style="left:141.7px;top:114.5px;width:10.5px;height:5.2px;background:rgba(200,200,200,0.45)"></div>
<div class="t" style="left:142.7px;top:114.6px;font-size:4.3px;line-height:5.2px;color:#3c3c3c">РП 1</div>
<div class="t" style="left:125.7px;top:114.7px;font-size:3px;line-height:5px;color:#777">▸</div>
<svg class="a" style="left:130.5px;top:115.1px" width="6" height="4"><path d="M0.5,2 Q3,0 5.5,2 Q3,4 0.5,2Z" fill="none" stroke="#b8b8b8" stroke-width="0.45"/></svg>
<div class="a" style="left:135.6px;top:114.7px;width:5.8px;height:4.8px;background:#e4eefa;border:0.5px solid #a0c0e8"></div>
<div class="a" style="left:138.2px;top:114.7px;width:0.5px;height:4.8px;background:#b0cdf0"></div>
<div class="a" style="left:135.6px;top:116.9px;width:5.8px;height:0.5px;background:#b0cdf0"></div>
<div class="a" style="left:141.7px;top:121.7px;width:10.5px;height:5.2px;background:rgba(200,200,200,0.45)"></div>
<div class="t" style="left:142.7px;top:121.8px;font-size:4.3px;line-height:5.2px;color:#3c3c3c">РП 2</div>
<div class="t" style="left:125.7px;top:121.9px;font-size:3px;line-height:5px;color:#777">▸</div>
<svg class="a" style="left:130.5px;top:122.3px" width="6" height="4"><path d="M0.5,2 Q3,0 5.5,2 Q3,4 0.5,2Z" fill="none" stroke="#b8b8b8" stroke-width="0.45"/></svg>
<div class="a" style="left:135.6px;top:121.9px;width:5.8px;height:4.8px;background:#e4eefa;border:0.5px solid #a0c0e8"></div>
<div class="a" style="left:138.2px;top:121.9px;width:0.5px;height:4.8px;background:#b0cdf0"></div>
<div class="a" style="left:135.6px;top:124.1px;width:5.8px;height:0.5px;background:#b0cdf0"></div>
<div class="a" style="left:139.3px;top:128.9px;width:24.5px;height:5.2px;background:rgba(200,200,200,0.45)"></div>
<div class="t" style="left:140.3px;top:129.0px;font-size:4.3px;line-height:5.2px;color:#3c3c3c">Сечения [1]</div>
<div class="t" style="left:123.4px;top:129.1px;font-size:3px;line-height:5px;color:#777">▸</div>
<svg class="a" style="left:127.8px;top:129.5px" width="6" height="4"><path d="M0.5,2 Q3,0 5.5,2 Q3,4 0.5,2Z" fill="none" stroke="#b8b8b8" stroke-width="0.45"/></svg>
<div class="a" style="left:133.0px;top:129.4px;width:5.6px;height:4.2px;background:#f8cf5a;border-radius:0.4px"></div>
<div class="a" style="left:133.0px;top:129.0px;width:2.4px;height:1px;background:#f0c040"></div>
<div class="a" style="left:135.8px;top:136.1px;width:56.5px;height:5.2px;background:rgba(200,200,200,0.45)"></div>
<div class="t" style="left:136.8px;top:136.2px;font-size:4.3px;line-height:5.2px;color:#3c3c3c">Геометрические элементы [4]</div>
<div class="t" style="left:120.5px;top:136.3px;font-size:3px;line-height:5px;color:#777">▸</div>
<svg class="a" style="left:125.0px;top:136.7px" width="6" height="4"><path d="M0.5,2 Q3,0 5.5,2 Q3,4 0.5,2Z" fill="none" stroke="#b8b8b8" stroke-width="0.45"/></svg>
<div class="a" style="left:130.5px;top:136.6px;width:5.6px;height:4.2px;background:#f8cf5a;border-radius:0.4px"></div>
<div class="a" style="left:130.5px;top:136.2px;width:2.4px;height:1px;background:#f0c040"></div>
<div class="a" style="left:135.8px;top:143.3px;width:28.5px;height:5.2px;background:rgba(200,200,200,0.45)"></div>
<div class="t" style="left:136.8px;top:143.4px;font-size:4.3px;line-height:5.2px;color:#3c3c3c">Материалы [1]</div>
<div class="t" style="left:120.5px;top:143.5px;font-size:3px;line-height:5px;color:#777">▸</div>
<svg class="a" style="left:125.0px;top:143.9px" width="6" height="4"><path d="M0.5,2 Q3,0 5.5,2 Q3,4 0.5,2Z" fill="none" stroke="#b8b8b8" stroke-width="0.45"/></svg>
<div class="a" style="left:130.5px;top:143.8px;width:5.6px;height:4.2px;background:#f8cf5a;border-radius:0.4px"></div>
<div class="a" style="left:130.5px;top:143.4px;width:2.4px;height:1px;background:#f0c040"></div>
<div class="a" style="left:135.8px;top:150.5px;width:26.5px;height:5.2px;background:rgba(200,200,200,0.45)"></div>
<div class="t" style="left:136.8px;top:150.6px;font-size:4.3px;line-height:5.2px;color:#3c3c3c">Операции [7]</div>
<div class="t" style="left:120.5px;top:150.7px;font-size:3px;line-height:5px;color:#777">▸</div>
<svg class="a" style="left:124.5px;top:151.1px" width="6" height="4"><path d="M0.3,2 Q3,-0.6 5.7,2 Q3,4.6 0.3,2Z" fill="#1a1a1a"/><circle cx="3" cy="2" r="0.7" fill="#fff"/></svg>
<div class="a" style="left:130.5px;top:151.0px;width:5.6px;height:4.2px;background:#f8cf5a;border-radius:0.4px"></div>
<div class="a" style="left:130.5px;top:150.6px;width:2.4px;height:1px;background:#f0c040"></div>
<div class="a" style="left:135.8px;top:157.7px;width:26.5px;height:5.2px;background:rgba(200,200,200,0.45)"></div>
<div class="t" style="left:136.8px;top:157.8px;font-size:4.3px;line-height:5.2px;color:#3c3c3c">Проекции [2]</div>
<div class="t" style="left:120.5px;top:157.9px;font-size:3px;line-height:5px;color:#777">▸</div>
<svg class="a" style="left:125.0px;top:158.3px" width="6" height="4"><path d="M0.5,2 Q3,0 5.5,2 Q3,4 0.5,2Z" fill="none" stroke="#b8b8b8" stroke-width="0.45"/></svg>
<div class="a" style="left:130.5px;top:158.2px;width:5.6px;height:4.2px;background:#f8cf5a;border-radius:0.4px"></div>
<div class="a" style="left:130.5px;top:157.8px;width:2.4px;height:1px;background:#f0c040"></div>
<div class="a" style="left:139.3px;top:164.9px;width:22.5px;height:5.2px;background:rgba(200,200,200,0.45)"></div>
<div class="t" style="left:140.3px;top:165.0px;font-size:4.3px;line-height:5.2px;color:#3c3c3c">Проекция 1</div>
<div class="t" style="left:123.4px;top:165.1px;font-size:3px;line-height:5px;color:#777">▸</div>
<svg class="a" style="left:127.8px;top:165.5px" width="6" height="4"><path d="M0.5,2 Q3,0 5.5,2 Q3,4 0.5,2Z" fill="none" stroke="#b8b8b8" stroke-width="0.45"/></svg>
<div class="a" style="left:134.5px;top:165.0px;width:4.5px;height:5px;background:#f4f4f4;border:0.5px solid #777"></div>
<div class="a" style="left:135.5px;top:166.4px;width:2.5px;height:2.5px;border:0.5px solid #555"></div>
<div class="a" style="left:133.5px;top:165.5px;width:2.2px;height:2.2px;background:#2a60b0;border-radius:50%"></div>
<div class="a" style="left:139.3px;top:172.1px;width:22.5px;height:5.2px;background:rgba(200,200,200,0.45)"></div>
<div class="t" style="left:140.3px;top:172.2px;font-size:4.3px;line-height:5.2px;color:#3c3c3c">Проекция 2</div>
<div class="t" style="left:123.4px;top:172.3px;font-size:3px;line-height:5px;color:#777">▸</div>
<svg class="a" style="left:127.8px;top:172.7px" width="6" height="4"><path d="M0.5,2 Q3,0 5.5,2 Q3,4 0.5,2Z" fill="none" stroke="#b8b8b8" stroke-width="0.45"/></svg>
<div class="a" style="left:134.5px;top:172.2px;width:4.5px;height:5px;background:#f4f4f4;border:0.5px solid #777"></div>
<div class="a" style="left:135.5px;top:173.6px;width:2.5px;height:2.5px;border:0.5px solid #555"></div>
<div class="a" style="left:133.5px;top:172.7px;width:2.2px;height:2.2px;background:#2a60b0;border-radius:50%"></div>
<div class="a" style="left:141.7px;top:179.3px;width:14.5px;height:5.2px;background:rgba(200,200,200,0.45)"></div>
<div class="t" style="left:142.7px;top:179.4px;font-size:4.3px;line-height:5.2px;color:#3c3c3c">Тело_1</div>
<div class="t" style="left:120.5px;top:179.5px;font-size:3px;line-height:5px;color:#777">▸</div>
<svg class="a" style="left:130.5px;top:179.9px" width="6" height="4"><path d="M0.5,2 Q3,0 5.5,2 Q3,4 0.5,2Z" fill="none" stroke="#b8b8b8" stroke-width="0.45"/></svg>
<div class="a" style="left:136.5px;top:179.8px;width:4.5px;height:4.2px;background:#3a88d8;border-radius:0.5px"></div>
<div class="a" style="left:141.7px;top:186.4px;width:14.5px;height:5.2px;background:rgba(200,200,200,0.45)"></div>
<div class="t" style="left:142.7px;top:186.5px;font-size:4.3px;line-height:5.2px;color:#a0a0a0">Тело_2</div>
<div class="t" style="left:120.5px;top:186.6px;font-size:3px;line-height:5px;color:#777">▸</div>
<svg class="a" style="left:124.5px;top:187.0px" width="6" height="4"><path d="M0.3,2 Q3,-0.6 5.7,2 Q3,4.6 0.3,2Z" fill="#1a1a1a"/><circle cx="3" cy="2" r="0.7" fill="#fff"/></svg>
<div class="a" style="left:136.5px;top:186.9px;width:4.5px;height:4.2px;background:#a8c8ec;border-radius:0.5px"></div>
<!-- TREE END -->
<!-- DRAW START -->
<div class="a" style="left:489px;top:60px;width:369px;height:419px;background:#fff;border:1.2px solid #f2a86e;border-bottom:none"></div>
<div class="a" style="left:490.2px;top:61.2px;width:355.8px;height:5.3px;background:#f5f5f5;border-bottom:0.5px solid #d8d8d8"></div>
<div class="a" style="left:490.2px;top:66.5px;width:5px;height:412.5px;background:#f5f5f5;border-right:0.5px solid #dcdcdc"></div>
<svg class="a" style="left:0;top:0" width="890" height="500"><line x1="507.7" y1="63.5" x2="507.7" y2="66.5" stroke="#999" stroke-width="0.4"/><line x1="513.6" y1="65" x2="513.6" y2="66.5" stroke="#aaa" stroke-width="0.3"/><text x="507.7" y="64.6" font-family="Liberation Sans" font-size="3.3" fill="#777" text-anchor="middle">-20</text><line x1="519.5" y1="63.5" x2="519.5" y2="66.5" stroke="#999" stroke-width="0.4"/><line x1="525.5" y1="65" x2="525.5" y2="66.5" stroke="#aaa" stroke-width="0.3"/><text x="519.5" y="64.6" font-family="Liberation Sans" font-size="3.3" fill="#777" text-anchor="middle">-10</text><line x1="531.4" y1="63.5" x2="531.4" y2="66.5" stroke="#999" stroke-width="0.4"/><line x1="537.3" y1="65" x2="537.3" y2="66.5" stroke="#aaa" stroke-width="0.3"/><text x="531.4" y="64.6" font-family="Liberation Sans" font-size="3.3" fill="#777" text-anchor="middle">0</text><line x1="543.3" y1="63.5" x2="543.3" y2="66.5" stroke="#999" stroke-width="0.4"/><line x1="549.2" y1="65" x2="549.2" y2="66.5" stroke="#aaa" stroke-width="0.3"/><text x="543.3" y="64.6" font-family="Liberation Sans" font-size="3.3" fill="#777" text-anchor="middle">10</text><line x1="555.1" y1="63.5" x2="555.1" y2="66.5" stroke="#999" stroke-width="0.4"/><line x1="561.0" y1="65" x2="561.0" y2="66.5" stroke="#aaa" stroke-width="0.3"/><text x="555.1" y="64.6" font-family="Liberation Sans" font-size="3.3" fill="#777" text-anchor="middle">20</text><line x1="567.0" y1="63.5" x2="567.0" y2="66.5" stroke="#999" stroke-width="0.4"/><line x1="572.9" y1="65" x2="572.9" y2="66.5" stroke="#aaa" stroke-width="0.3"/><text x="567.0" y="64.6" font-family="Liberation Sans" font-size="3.3" fill="#777" text-anchor="middle">30</text><line x1="578.8" y1="63.5" x2="578.8" y2="66.5" stroke="#999" stroke-width="0.4"/><line x1="584.8" y1="65" x2="584.8" y2="66.5" stroke="#aaa" stroke-width="0.3"/><text x="578.8" y="64.6" font-family="Liberation Sans" font-size="3.3" fill="#777" text-anchor="middle">40</text><line x1="590.7" y1="63.5" x2="590.7" y2="66.5" stroke="#999" stroke-width="0.4"/><line x1="596.6" y1="65" x2="596.6" y2="66.5" stroke="#aaa" stroke-width="0.3"/><text x="590.7" y="64.6" font-family="Liberation Sans" font-size="3.3" fill="#777" text-anchor="middle">50</text><line x1="602.6" y1="63.5" x2="602.6" y2="66.5" stroke="#999" stroke-width="0.4"/><line x1="608.5" y1="65" x2="608.5" y2="66.5" stroke="#aaa" stroke-width="0.3"/><text x="602.6" y="64.6" font-family="Liberation Sans" font-size="3.3" fill="#777" text-anchor="middle">60</text><line x1="614.4" y1="63.5" x2="614.4" y2="66.5" stroke="#999" stroke-width="0.4"/><line x1="620.3" y1="65" x2="620.3" y2="66.5" stroke="#aaa" stroke-width="0.3"/><text x="614.4" y="64.6" font-family="Liberation Sans" font-size="3.3" fill="#777" text-anchor="middle">70</text><line x1="626.3" y1="63.5" x2="626.3" y2="66.5" stroke="#999" stroke-width="0.4"/><line x1="632.2" y1="65" x2="632.2" y2="66.5" stroke="#aaa" stroke-width="0.3"/><text x="626.3" y="64.6" font-family="Liberation Sans" font-size="3.3" fill="#777" text-anchor="middle">80</text><line x1="638.1" y1="63.5" x2="638.1" y2="66.5" stroke="#999" stroke-width="0.4"/><line x1="644.1" y1="65" x2="644.1" y2="66.5" stroke="#aaa" stroke-width="0.3"/><text x="638.1" y="64.6" font-family="Liberation Sans" font-size="3.3" fill="#777" text-anchor="middle">90</text><line x1="650.0" y1="63.5" x2="650.0" y2="66.5" stroke="#999" stroke-width="0.4"/><line x1="655.9" y1="65" x2="655.9" y2="66.5" stroke="#aaa" stroke-width="0.3"/><text x="650.0" y="64.6" font-family="Liberation Sans" font-size="3.3" fill="#777" text-anchor="middle">100</text><line x1="661.9" y1="63.5" x2="661.9" y2="66.5" stroke="#999" stroke-width="0.4"/><line x1="667.8" y1="65" x2="667.8" y2="66.5" stroke="#aaa" stroke-width="0.3"/><text x="661.9" y="64.6" font-family="Liberation Sans" font-size="3.3" fill="#777" text-anchor="middle">110</text><line x1="673.7" y1="63.5" x2="673.7" y2="66.5" stroke="#999" stroke-width="0.4"/><line x1="679.6" y1="65" x2="679.6" y2="66.5" stroke="#aaa" stroke-width="0.3"/><text x="673.7" y="64.6" font-family="Liberation Sans" font-size="3.3" fill="#777" text-anchor="middle">120</text><line x1="685.6" y1="63.5" x2="685.6" y2="66.5" stroke="#999" stroke-width="0.4"/><line x1="691.5" y1="65" x2="691.5" y2="66.5" stroke="#aaa" stroke-width="0.3"/><text x="685.6" y="64.6" font-family="Liberation Sans" font-size="3.3" fill="#777" text-anchor="middle">130</text><line x1="697.4" y1="63.5" x2="697.4" y2="66.5" stroke="#999" stroke-width="0.4"/><line x1="703.4" y1="65" x2="703.4" y2="66.5" stroke="#aaa" stroke-width="0.3"/><text x="697.4" y="64.6" font-family="Liberation Sans" font-size="3.3" fill="#777" text-anchor="middle">140</text><line x1="709.3" y1="63.5" x2="709.3" y2="66.5" stroke="#999" stroke-width="0.4"/><line x1="715.2" y1="65" x2="715.2" y2="66.5" stroke="#aaa" stroke-width="0.3"/><text x="709.3" y="64.6" font-family="Liberation Sans" font-size="3.3" fill="#777" text-anchor="middle">150</text><line x1="721.2" y1="63.5" x2="721.2" y2="66.5" stroke="#999" stroke-width="0.4"/><line x1="727.1" y1="65" x2="727.1" y2="66.5" stroke="#aaa" stroke-width="0.3"/><text x="721.2" y="64.6" font-family="Liberation Sans" font-size="3.3" fill="#777" text-anchor="middle">160</text><line x1="733.0" y1="63.5" x2="733.0" y2="66.5" stroke="#999" stroke-width="0.4"/><line x1="738.9" y1="65" x2="738.9" y2="66.5" stroke="#aaa" stroke-width="0.3"/><text x="733.0" y="64.6" font-family="Liberation Sans" font-size="3.3" fill="#777" text-anchor="middle">170</text><line x1="744.9" y1="63.5" x2="744.9" y2="66.5" stroke="#999" stroke-width="0.4"/><line x1="750.8" y1="65" x2="750.8" y2="66.5" stroke="#aaa" stroke-width="0.3"/><text x="744.9" y="64.6" font-family="Liberation Sans" font-size="3.3" fill="#777" text-anchor="middle">180</text><line x1="756.7" y1="63.5" x2="756.7" y2="66.5" stroke="#999" stroke-width="0.4"/><line x1="762.7" y1="65" x2="762.7" y2="66.5" stroke="#aaa" stroke-width="0.3"/><text x="756.7" y="64.6" font-family="Liberation Sans" font-size="3.3" fill="#777" text-anchor="middle">190</text><line x1="768.6" y1="63.5" x2="768.6" y2="66.5" stroke="#999" stroke-width="0.4"/><line x1="774.5" y1="65" x2="774.5" y2="66.5" stroke="#aaa" stroke-width="0.3"/><text x="768.6" y="64.6" font-family="Liberation Sans" font-size="3.3" fill="#777" text-anchor="middle">200</text><line x1="780.5" y1="63.5" x2="780.5" y2="66.5" stroke="#999" stroke-width="0.4"/><line x1="786.4" y1="65" x2="786.4" y2="66.5" stroke="#aaa" stroke-width="0.3"/><text x="780.5" y="64.6" font-family="Liberation Sans" font-size="3.3" fill="#777" text-anchor="middle">210</text><line x1="792.3" y1="63.5" x2="792.3" y2="66.5" stroke="#999" stroke-width="0.4"/><line x1="798.2" y1="65" x2="798.2" y2="66.5" stroke="#aaa" stroke-width="0.3"/><text x="792.3" y="64.6" font-family="Liberation Sans" font-size="3.3" fill="#777" text-anchor="middle">220</text><line x1="804.2" y1="63.5" x2="804.2" y2="66.5" stroke="#999" stroke-width="0.4"/><line x1="810.1" y1="65" x2="810.1" y2="66.5" stroke="#aaa" stroke-width="0.3"/><text x="804.2" y="64.6" font-family="Liberation Sans" font-size="3.3" fill="#777" text-anchor="middle">230</text><line x1="816.0" y1="63.5" x2="816.0" y2="66.5" stroke="#999" stroke-width="0.4"/><line x1="822.0" y1="65" x2="822.0" y2="66.5" stroke="#aaa" stroke-width="0.3"/><text x="816.0" y="64.6" font-family="Liberation Sans" font-size="3.3" fill="#777" text-anchor="middle">240</text><line x1="827.9" y1="63.5" x2="827.9" y2="66.5" stroke="#999" stroke-width="0.4"/><line x1="833.8" y1="65" x2="833.8" y2="66.5" stroke="#aaa" stroke-width="0.3"/><text x="827.9" y="64.6" font-family="Liberation Sans" font-size="3.3" fill="#777" text-anchor="middle">250</text><line x1="839.8" y1="63.5" x2="839.8" y2="66.5" stroke="#999" stroke-width="0.4"/><line x1="845.7" y1="65" x2="845.7" y2="66.5" stroke="#aaa" stroke-width="0.3"/><text x="839.8" y="64.6" font-family="Liberation Sans" font-size="3.3" fill="#777" text-anchor="middle">260</text><line x1="851.6" y1="63.5" x2="851.6" y2="66.5" stroke="#999" stroke-width="0.4"/><line x1="857.5" y1="65" x2="857.5" y2="66.5" stroke="#aaa" stroke-width="0.3"/><text x="851.6" y="64.6" font-family="Liberation Sans" font-size="3.3" fill="#777" text-anchor="middle">270</text><line x1="493" y1="72.0" x2="495" y2="72.0" stroke="#aaa" stroke-width="0.3"/><text x="492" y="74.0" font-family="Liberation Sans" font-size="3" fill="#888" transform="rotate(-90 492 74.0)">0</text><line x1="493" y1="82.4" x2="495" y2="82.4" stroke="#aaa" stroke-width="0.3"/><text x="492" y="84.4" font-family="Liberation Sans" font-size="3" fill="#888" transform="rotate(-90 492 84.4)">-10</text><line x1="493" y1="92.8" x2="495" y2="92.8" stroke="#aaa" stroke-width="0.3"/><text x="492" y="94.8" font-family="Liberation Sans" font-size="3" fill="#888" transform="rotate(-90 492 94.8)">-20</text><line x1="493" y1="103.2" x2="495" y2="103.2" stroke="#aaa" stroke-width="0.3"/><text x="492" y="105.2" font-family="Liberation Sans" font-size="3" fill="#888" transform="rotate(-90 492 105.2)">-30</text><line x1="493" y1="113.6" x2="495" y2="113.6" stroke="#aaa" stroke-width="0.3"/><text x="492" y="115.6" font-family="Liberation Sans" font-size="3" fill="#888" transform="rotate(-90 492 115.6)">-40</text><line x1="493" y1="124.0" x2="495" y2="124.0" stroke="#aaa" stroke-width="0.3"/><text x="492" y="126.0" font-family="Liberation Sans" font-size="3" fill="#888" transform="rotate(-90 492 126.0)">-50</text><line x1="493" y1="134.4" x2="495" y2="134.4" stroke="#aaa" stroke-width="0.3"/><text x="492" y="136.4" font-family="Liberation Sans" font-size="3" fill="#888" transform="rotate(-90 492 136.4)">-60</text><line x1="493" y1="144.8" x2="495" y2="144.8" stroke="#aaa" stroke-width="0.3"/><text x="492" y="146.8" font-family="Liberation Sans" font-size="3" fill="#888" transform="rotate(-90 492 146.8)">-70</text><line x1="493" y1="155.2" x2="495" y2="155.2" stroke="#aaa" stroke-width="0.3"/><text x="492" y="157.2" font-family="Liberation Sans" font-size="3" fill="#888" transform="rotate(-90 492 157.2)">-80</text><line x1="493" y1="165.6" x2="495" y2="165.6" stroke="#aaa" stroke-width="0.3"/><text x="492" y="167.6" font-family="Liberation Sans" font-size="3" fill="#888" transform="rotate(-90 492 167.6)">-90</text><line x1="493" y1="176.0" x2="495" y2="176.0" stroke="#aaa" stroke-width="0.3"/><text x="492" y="178.0" font-family="Liberation Sans" font-size="3" fill="#888" transform="rotate(-90 492 178.0)">-100</text><line x1="493" y1="186.4" x2="495" y2="186.4" stroke="#aaa" stroke-width="0.3"/><text x="492" y="188.4" font-family="Liberation Sans" font-size="3" fill="#888" transform="rotate(-90 492 188.4)">-110</text><line x1="493" y1="196.8" x2="495" y2="196.8" stroke="#aaa" stroke-width="0.3"/><text x="492" y="198.8" font-family="Liberation Sans" font-size="3" fill="#888" transform="rotate(-90 492 198.8)">-120</text><line x1="493" y1="207.2" x2="495" y2="207.2" stroke="#aaa" stroke-width="0.3"/><text x="492" y="209.2" font-family="Liberation Sans" font-size="3" fill="#888" transform="rotate(-90 492 209.2)">-130</text><line x1="493" y1="217.6" x2="495" y2="217.6" stroke="#aaa" stroke-width="0.3"/><text x="492" y="219.6" font-family="Liberation Sans" font-size="3" fill="#888" transform="rotate(-90 492 219.6)">-140</text><line x1="493" y1="228.0" x2="495" y2="228.0" stroke="#aaa" stroke-width="0.3"/><text x="492" y="230.0" font-family="Liberation Sans" font-size="3" fill="#888" transform="rotate(-90 492 230.0)">-150</text><line x1="493" y1="238.4" x2="495" y2="238.4" stroke="#aaa" stroke-width="0.3"/><text x="492" y="240.4" font-family="Liberation Sans" font-size="3" fill="#888" transform="rotate(-90 492 240.4)">-160</text><line x1="493" y1="248.8" x2="495" y2="248.8" stroke="#aaa" stroke-width="0.3"/><text x="492" y="250.8" font-family="Liberation Sans" font-size="3" fill="#888" transform="rotate(-90 492 250.8)">-170</text><line x1="493" y1="259.2" x2="495" y2="259.2" stroke="#aaa" stroke-width="0.3"/><text x="492" y="261.2" font-family="Liberation Sans" font-size="3" fill="#888" transform="rotate(-90 492 261.2)">-180</text><line x1="493" y1="269.6" x2="495" y2="269.6" stroke="#aaa" stroke-width="0.3"/><text x="492" y="271.6" font-family="Liberation Sans" font-size="3" fill="#888" transform="rotate(-90 492 271.6)">-190</text><line x1="493" y1="280.0" x2="495" y2="280.0" stroke="#aaa" stroke-width="0.3"/><text x="492" y="282.0" font-family="Liberation Sans" font-size="3" fill="#888" transform="rotate(-90 492 282.0)">-200</text><line x1="493" y1="290.4" x2="495" y2="290.4" stroke="#aaa" stroke-width="0.3"/><text x="492" y="292.4" font-family="Liberation Sans" font-size="3" fill="#888" transform="rotate(-90 492 292.4)">-210</text><line x1="493" y1="300.8" x2="495" y2="300.8" stroke="#aaa" stroke-width="0.3"/><text x="492" y="302.8" font-family="Liberation Sans" font-size="3" fill="#888" transform="rotate(-90 492 302.8)">-220</text><line x1="493" y1="311.2" x2="495" y2="311.2" stroke="#aaa" stroke-width="0.3"/><text x="492" y="313.2" font-family="Liberation Sans" font-size="3" fill="#888" transform="rotate(-90 492 313.2)">-230</text><line x1="493" y1="321.6" x2="495" y2="321.6" stroke="#aaa" stroke-width="0.3"/><text x="492" y="323.6" font-family="Liberation Sans" font-size="3" fill="#888" transform="rotate(-90 492 323.6)">-240</text><line x1="493" y1="332.0" x2="495" y2="332.0" stroke="#aaa" stroke-width="0.3"/><text x="492" y="334.0" font-family="Liberation Sans" font-size="3" fill="#888" transform="rotate(-90 492 334.0)">-250</text><line x1="493" y1="342.4" x2="495" y2="342.4" stroke="#aaa" stroke-width="0.3"/><text x="492" y="344.4" font-family="Liberation Sans" font-size="3" fill="#888" transform="rotate(-90 492 344.4)">-260</text><line x1="493" y1="352.8" x2="495" y2="352.8" stroke="#aaa" stroke-width="0.3"/><text x="492" y="354.8" font-family="Liberation Sans" font-size="3" fill="#888" transform="rotate(-90 492 354.8)">-270</text><line x1="493" y1="363.2" x2="495" y2="363.2" stroke="#aaa" stroke-width="0.3"/><text x="492" y="365.2" font-family="Liberation Sans" font-size="3" fill="#888" transform="rotate(-90 492 365.2)">-280</text><line x1="493" y1="373.6" x2="495" y2="373.6" stroke="#aaa" stroke-width="0.3"/><text x="492" y="375.6" font-family="Liberation Sans" font-size="3" fill="#888" transform="rotate(-90 492 375.6)">-290</text><line x1="493" y1="384.0" x2="495" y2="384.0" stroke="#aaa" stroke-width="0.3"/><text x="492" y="386.0" font-family="Liberation Sans" font-size="3" fill="#888" transform="rotate(-90 492 386.0)">-300</text><line x1="493" y1="394.4" x2="495" y2="394.4" stroke="#aaa" stroke-width="0.3"/><text x="492" y="396.4" font-family="Liberation Sans" font-size="3" fill="#888" transform="rotate(-90 492 396.4)">-310</text><line x1="493" y1="404.8" x2="495" y2="404.8" stroke="#aaa" stroke-width="0.3"/><text x="492" y="406.8" font-family="Liberation Sans" font-size="3" fill="#888" transform="rotate(-90 492 406.8)">-320</text><line x1="493" y1="415.2" x2="495" y2="415.2" stroke="#aaa" stroke-width="0.3"/><text x="492" y="417.2" font-family="Liberation Sans" font-size="3" fill="#888" transform="rotate(-90 492 417.2)">-330</text><line x1="493" y1="425.6" x2="495" y2="425.6" stroke="#aaa" stroke-width="0.3"/><text x="492" y="427.6" font-family="Liberation Sans" font-size="3" fill="#888" transform="rotate(-90 492 427.6)">-340</text><line x1="493" y1="436.0" x2="495" y2="436.0" stroke="#aaa" stroke-width="0.3"/><text x="492" y="438.0" font-family="Liberation Sans" font-size="3" fill="#888" transform="rotate(-90 492 438.0)">-350</text><line x1="493" y1="446.4" x2="495" y2="446.4" stroke="#aaa" stroke-width="0.3"/><text x="492" y="448.4" font-family="Liberation Sans" font-size="3" fill="#888" transform="rotate(-90 492 448.4)">-360</text><line x1="493" y1="456.8" x2="495" y2="456.8" stroke="#aaa" stroke-width="0.3"/><text x="492" y="458.8" font-family="Liberation Sans" font-size="3" fill="#888" transform="rotate(-90 492 458.8)">-370</text><line x1="493" y1="467.2" x2="495" y2="467.2" stroke="#aaa" stroke-width="0.3"/><text x="492" y="469.2" font-family="Liberation Sans" font-size="3" fill="#888" transform="rotate(-90 492 469.2)">-380</text></svg>
<div class="t" style="left:490.6px;top:473.89px;font-size:3px;line-height:3.60px;color:#333;">▼</div>
<div class="a" style="left:495.5px;top:66.5px;width:11.5px;height:138px;background:#fafafa;border-right:0.5px solid #e4e4e4"></div>
<div class="a" style="left:496.5px;top:87px;width:10px;height:10.5px;background:#cfe0f6;"></div>
<svg class="a" style="left:495px;top:66px" width="13" height="140" fill="none" stroke-width="0.7"><path d="M3,5.5 l2.5,2.5 l4.5,-5" stroke="#666" stroke-width="0.9"/><rect x="2.5" y="11.5" width="8" height="6" fill="#dde8f4" stroke="#3a6ab8"/><line x1="2.5" y1="13" x2="10.5" y2="13" stroke="#3a6ab8" stroke-width="1.2"/><line x1="2.5" y1="23.5" x2="10.5" y2="23.5" stroke="#5a80c0"/><line x1="2.5" y1="28" x2="10.5" y2="28" stroke="#5a80c0"/><text x="3" y="27" font-size="2.5" fill="#3a6ab8" stroke="none">H</text><circle cx="6.5" cy="37" r="3" stroke="#3a6ab8"/><line x1="2" y1="37" x2="11" y2="37" stroke="#3a6ab8"/><line x1="6.5" y1="32.5" x2="6.5" y2="41.5" stroke="#3a6ab8"/><circle cx="6.5" cy="47" r="3" stroke="#3a6ab8"/><line x1="2" y1="47" x2="11" y2="47" stroke="#3a6ab8"/><circle cx="6.5" cy="57" r="3" stroke="#3a6ab8"/><line x1="6.5" y1="52.5" x2="6.5" y2="61.5" stroke="#3a6ab8"/><rect x="3" y="65" width="6" height="6" stroke="#7a9ad0"/><line x1="3" y1="71" x2="9" y2="65" stroke="#7a9ad0"/><circle cx="10" cy="71.5" r="0.9" fill="#e03030" stroke="none"/><rect x="3" y="76" width="6" height="6" stroke="#7a9ad0"/><line x1="3" y1="82" x2="9" y2="76" stroke="#7a9ad0"/><circle cx="10" cy="82.5" r="0.9" fill="#e03030" stroke="none"/><rect x="3" y="86" width="6" height="6" stroke="#7a9ad0"/><line x1="3" y1="92" x2="9" y2="86" stroke="#7a9ad0"/><circle cx="10" cy="92.5" r="0.9" fill="#e03030" stroke="none"/><rect x="2.5" y="96" width="5" height="5" stroke="#7a9ad0"/><circle cx="8.5" cy="101" r="2.5" stroke="#e04040"/><rect x="2.5" y="106.5" width="5" height="5" stroke="#7a9ad0"/><path d="M7,113 q1,-3 4,-3" stroke="#e04040"/><circle cx="6.5" cy="121" r="3.2" stroke="#555"/><text x="5" y="122.5" font-size="4" fill="#555" stroke="none">E</text><path d="M3,128 l7,7 M10,128 l-7,7" stroke="#e02020" stroke-width="1.4"/></svg>
<div class="a" style="left:496.5px;top:470.5px;width:5px;height:6.5px;background:#dce8f6;border:0.5px solid #9ab4dc"></div>
<div class="a" style="left:502.5px;top:470.5px;width:5px;height:6.5px;background:#f4f4f4;border:0.5px solid #c8c8c8"></div>
<div class="a" style="left:530px;top:81.6px;width:245.4px;height:346px;background:transparent;border:0.6px solid #e0e0e0"></div>
<div class="a" style="left:846px;top:66.5px;width:11px;height:231px;background:#fafafa;border-left:0.5px solid #e8e8e8"></div>
<div class="a" style="left:846.5px;top:79.8px;width:10px;height:10.5px;background:#cfe0f6;"></div>
<svg class="a" style="left:845px;top:66px" width="13" height="232" fill="none" stroke-width="0.7"><rect x="2.5" y="3" width="8" height="7" stroke="#3a6ab8" fill="#eef4fb"/><line x1="2.5" y1="5.5" x2="10.5" y2="5.5" stroke="#3a6ab8"/><line x1="6.5" y1="5.5" x2="6.5" y2="10" stroke="#3a6ab8"/><path d="M3.5,22 v-4 a3,3 0 0 1 6,0 v4" stroke="#203a8a" stroke-width="2"/><rect x="2.6" y="20.5" width="2" height="1.8" fill="#e03030" stroke="none"/><rect x="8.5" y="20.5" width="2" height="1.8" fill="#e03030" stroke="none"/><circle cx="5.8" cy="30.5" r="2.6" stroke="#6a9ad8" fill="#eef4fb"/><line x1="7.8" y1="32.5" x2="10.5" y2="35.0" stroke="#e09040" stroke-width="1"/><circle cx="5.8" cy="40.5" r="2.6" stroke="#6a9ad8" fill="#eef4fb"/><line x1="7.8" y1="42.5" x2="10.5" y2="45.0" stroke="#e09040" stroke-width="1"/><circle cx="5.8" cy="50.5" r="2.6" stroke="#6a9ad8" fill="#eef4fb"/><line x1="7.8" y1="52.5" x2="10.5" y2="55.0" stroke="#e09040" stroke-width="1"/><circle cx="5.8" cy="61.5" r="2.6" stroke="#6a9ad8" fill="#eef4fb"/><line x1="7.8" y1="63.5" x2="10.5" y2="66.0" stroke="#e09040" stroke-width="1"/><text x="2.5" y="73" font-size="3" fill="#666" stroke="none">dim</text><path d="M3,75 l3,2 l3,-2" stroke="#d0a030"/><text x="2.5" y="85.5" font-size="3" fill="#666" stroke="none">dim</text><path d="M3,87.5 l3,2 l3,-2" stroke="#d0a030"/><text x="2.5" y="95.5" font-size="3" fill="#666" stroke="none">dim</text><path d="M3,97.5 l3,2 l3,-2" stroke="#d0a030"/><path d="M2,105 l2,2 l3,-4" stroke="#e02020" stroke-width="0.9"/><polygon points="4,108 8,106 11,107.5 11,112 7,114 4,112" fill="#2a7ad8" stroke="none"/><path d="M2,115 l2,2 l3,-4 M5,115 l2,2 l3,-4" stroke="#e02020" stroke-width="0.8"/><polygon points="4,118 8,116 11,117.5 11,122 7,124 4,122" fill="#2a7ad8" stroke="none"/><line x1="1.5" y1="129" x2="11.5" y2="129" stroke="#2a5aa8" stroke-width="1.4"/><line x1="6.5" y1="125" x2="6.5" y2="133" stroke="#2a5aa8" stroke-width="1.2"/><rect x="2.5" y="137" width="8" height="6" stroke="#8aa0c0" fill="#f0f4f8"/><path d="M3.5,146 h4 l2,2 v7 h-6 z" stroke="#5a7ab0" fill="#fff"/><rect x="2.5" y="157" width="8" height="6" stroke="#8aa0c0" fill="#f0f4f8"/><rect x="3.5" y="168" width="7.5" height="6.5" stroke="#5a7ab0" fill="#dce8f6"/><line x1="2" y1="166" x2="4" y2="168" stroke="#555"/><polygon points="3,184.5 5,178.5 11,178.5 9,184.5" fill="#8ab8e8" stroke="#5a90d0"/><rect x="3.5" y="188.5" width="6" height="6.5" stroke="#5a7ab0" fill="#e8f0f8" stroke-dasharray="1,0.5"/><path d="M4,205 a3,3 0 1 0 5,-5" stroke="#5a80c0"/><text x="2.2" y="219" font-size="8" fill="#2a4a88" stroke="none" font-family="Liberation Sans">A</text><circle cx="10" cy="212.5" r="0.8" fill="#e03030" stroke="none"/><text x="2.2" y="230.5" font-size="8" fill="#2a4a88" stroke="none" font-family="Liberation Sans">A</text><path d="M9,223 l1,1 l1,-1" stroke="#e03030"/></svg>
<svg class="a" style="left:0;top:0" width="890" height="500"><rect x="574.2" y="170.1" width="157.3" height="87" fill="none" stroke="#e4e4e4" stroke-width="0.5" stroke-dasharray="1,1"/><rect x="574.2" y="262.1" width="157.3" height="86.3" fill="none" stroke="#e4e4e4" stroke-width="0.5" stroke-dasharray="1,1"/><defs><pattern id="hatch" patternUnits="userSpaceOnUse" width="2.2" height="2.2" patternTransform="rotate(-45)"><line x1="0" y1="0" x2="0" y2="2.2" stroke="#9a9a9a" stroke-width="0.45"/></pattern></defs><path d="M611.6,178.8 H693.5 V225.3 H722.8 V249 H687.4 V237.5 H617.6 V249 H582.2 V225.3 H611.6 Z M625.7,178.8 H679.3 V208.1 H666.2 V237.5 H639.5 V208.1 H625.7 Z" fill="url(#hatch)" fill-rule="evenodd"/><path d="M611.6,178.8 H693.5 V225.3 H722.8 V249 H687.4 V237.5 H617.6 V249 H582.2 V225.3 H611.6 Z" fill="none" stroke="#222" stroke-width="0.75"/><path d="M625.7,178.8 H679.3 V208.1 H666.2 V237.5 H639.5 V208.1 H625.7 Z" fill="none" stroke="#222" stroke-width="0.75"/><line x1="639.5" y1="208.1" x2="666.2" y2="208.1" stroke="#222" stroke-width="0.75"/><line x1="652.5" y1="204" x2="652.5" y2="240" stroke="#999" stroke-width="0.4" stroke-dasharray="3,1.5"/><circle cx="652.5" cy="172.5" r="0.6" fill="#e86060"/><line x1="651" y1="178.8" x2="654" y2="178.8" stroke="#e86060" stroke-width="0.5"/><circle cx="652.5" cy="214" r="0.9" fill="#2030e0"/><polygon points="651.5,207 653.5,207 652.5,205" fill="#30a030"/><line x1="653" y1="214" x2="660" y2="214" stroke="#c04040" stroke-width="0.4"/><polygon points="660,213 660,215 662,214" fill="#c03030"/><rect x="582.2" y="270.2" width="140.6" height="70.2" fill="none" stroke="#222" stroke-width="0.75"/><line x1="611.6" y1="270.2" x2="611.6" y2="340.4" stroke="#222" stroke-width="0.75"/><line x1="693.5" y1="270.2" x2="693.5" y2="340.4" stroke="#222" stroke-width="0.75"/><rect x="625.3" y="278.3" width="54" height="54" fill="none" stroke="#222" stroke-width="0.75"/><line x1="641.3" y1="332.3" x2="641.3" y2="340.4" stroke="#222" stroke-width="0.75"/><line x1="664.6" y1="332.3" x2="664.6" y2="340.4" stroke="#222" stroke-width="0.75"/><circle cx="652.5" cy="263.5" r="0.5" fill="#e86060"/><line x1="651" y1="270.2" x2="654" y2="270.2" stroke="#e86060" stroke-width="0.5"/><circle cx="652.5" cy="304" r="13.8" fill="none" stroke="#e85a40" stroke-width="0.7"/><line x1="636" y1="304.5" x2="669" y2="304.5" stroke="#bbb" stroke-width="0.4"/><line x1="652.5" y1="289" x2="652.5" y2="320" stroke="#bbb" stroke-width="0.4"/><circle cx="652.5" cy="305.5" r="0.9" fill="#2030e0"/><circle cx="652.5" cy="297.5" r="0.7" fill="#208040"/><line x1="652.5" y1="305.5" x2="652.5" y2="298" stroke="#80c080" stroke-width="0.3"/><line x1="653" y1="305.5" x2="660" y2="305.5" stroke="#d09090" stroke-width="0.3"/><polygon points="660,304.5 660,306.5 662,305.5" fill="#902020"/><polygon points="664,294 664,300 665.5,298.5 667,301 668,300.5 666.5,298 668.5,298" fill="#fff" stroke="#555" stroke-width="0.35"/><rect x="664.2" y="301.1" width="28.9" height="13.2" fill="#fff" stroke="#e0e0e0" stroke-width="0.4"/><line x1="665.5" y1="306" x2="668.5" y2="302.5" stroke="#3a6ac0" stroke-width="0.9"/><text x="670" y="305.5" font-family="Liberation Sans" font-size="3.6" fill="#444">Линия 743</text><text x="670" y="310.8" font-family="Liberation Sans" font-size="3.6" fill="#444">Окружность</text><line x1="530" y1="428" x2="537" y2="428" stroke="#e08080" stroke-width="0.5"/><polygon points="536.5,427 536.5,429 538.5,428" fill="#c02020"/><line x1="530" y1="428" x2="530" y2="420.5" stroke="#80c080" stroke-width="0.5"/><circle cx="530" cy="420.5" r="0.8" fill="#208040"/><circle cx="530" cy="428" r="1" fill="#2030e0"/></svg>
<!-- DRAW END -->
<!-- right panel -->
<!-- RIGHT START -->
<div class="a" style="left:853.70px;top:56.60px;width:0;height:0;border-left:1.2px solid transparent;border-right:1.2px solid transparent;border-top:1.32px solid #333"></div>
<div class="a" style="left:858px;top:53px;width:32px;height:426px;background:#fff;border-left:0.6px solid #d8d8d8"></div>
<div class="a" style="left:858.5px;top:53px;width:31.5px;height:10px;background:#f0f0f0;"></div>
<div class="t" style="left:860px;top:55.03px;font-size:5.2px;line-height:6.24px;color:#3a6ab8;">Стру...</div>
<svg class="a" style="left:876.5px;top:55.5px" width="4" height="6"><rect x="1" y="0.3" width="2" height="3" fill="none" stroke="#555" stroke-width="0.5"/><line x1="0.3" y1="3.4" x2="3.7" y2="3.4" stroke="#555" stroke-width="0.5"/><line x1="2" y1="3.4" x2="2" y2="5.5" stroke="#555" stroke-width="0.5"/></svg>
<div class="t" style="left:882.3px;top:55.20px;font-size:4.6px;line-height:5.52px;color:#222;">✕</div>
<div class="a" style="left:858.5px;top:62px;width:31.5px;height:9px;background:#f8f8f8;"></div>
<div class="t" style="left:861px;top:63.14px;font-size:5.5px;line-height:6.60px;color:#3a80d0;">⟳</div>
<div class="a" style="left:871px;top:64.5px;width:6px;height:0.8px;background:#8a9aaa;"></div>
<div class="a" style="left:872.2px;top:65.8px;width:3.6px;height:0.7px;background:#8a9aaa;"></div>
<div class="a" style="left:873.4px;top:66.8px;width:1.2px;height:2.5px;background:#8a9aaa;"></div>
<div class="a" style="left:878.20px;top:66.40px;width:0;height:0;border-left:1.2px solid transparent;border-right:1.2px solid transparent;border-top:1.32px solid #667"></div>
<div class="t" style="left:885.5px;top:63.96px;font-size:4.5px;line-height:5.40px;color:#556;">⊻</div>
<div class="a" style="left:863.4px;top:72.8px;width:17.4px;height:7.2px;background:#fff;border:0.5px solid #d8d8d8"></div>
<div class="a" style="left:877.20px;top:76.00px;width:0;height:0;border-left:1.2px solid transparent;border-right:1.2px solid transparent;border-top:1.32px solid #333"></div>
<div class="a" style="left:883.5px;top:73.3px;width:4px;height:4px;background:transparent;border:0.6px solid #555;border-radius:50%"></div>
<div class="a" style="left:882.2px;top:77.8px;width:2.2px;height:0.6px;background:#555;transform:rotate(-45deg)"></div>
<div class="a" style="left:858.5px;top:82.5px;width:31.5px;height:6.8px;background:#fafafa;border-bottom:0.5px solid #e4e4e4"></div>
<div class="t" style="left:861px;top:83.23px;font-size:3.9px;line-height:4.68px;color:#8a8a8a;">Элемент</div>
<div class="a" style="left:884.20px;top:85.30px;width:0;height:0;border-left:1.2px solid transparent;border-right:1.2px solid transparent;border-top:1.32px solid #707070"></div>
<div class="t" style="left:862px;top:91.77px;font-size:3.2px;line-height:3.84px;color:#333;">▸</div>
<div class="a" style="left:867.8px;top:91.3px;width:5px;height:5px;background:#4a8ad8;border-radius:1px"></div>
<div class="t" style="left:874px;top:91.15px;font-size:4.2px;line-height:5.04px;color:#2a5aa8;"><b>сохранен</b></div>
<div class="a" style="left:858.5px;top:273px;width:31.5px;height:7px;background:#f0f0f0;"></div>
<div class="t" style="left:860px;top:274.39px;font-size:3px;line-height:3.60px;color:#4a4a4a;">◂</div>
<div class="a" style="left:868px;top:274px;width:5.5px;height:5px;background:#cdcdcd;"></div>
<div class="t" style="left:886px;top:274.39px;font-size:3px;line-height:3.60px;color:#4a4a4a;">▸</div>
<div class="a" style="left:858.5px;top:280.5px;width:31.5px;height:7.5px;background:#f0f0f0;"></div>
<div class="a" style="left:860.6px;top:281px;width:18.4px;height:6.5px;background:#2b579a;"></div>
<div class="t" style="left:861px;top:281.57px;font-size:4px;line-height:4.80px;color:#fff;">Парамет</div>
<div class="t" style="left:880.5px;top:281.78px;font-size:3.5px;line-height:4.20px;color:#3a3a3a;">‹ ›</div>
<div class="a" style="left:858.5px;top:288.5px;width:31.5px;height:7.5px;background:#fff;border-bottom:0.5px solid #e0e0e0"></div>
<div class="a" style="left:874.5px;top:289px;width:0.5px;height:6px;background:#ddd;"></div>
<div class="t" style="left:862px;top:289.89px;font-size:3.8px;line-height:4.56px;color:#4a4a4a;">Имя</div>
<div class="t" style="left:876.5px;top:289.89px;font-size:3.8px;line-height:4.56px;color:#4a4a4a;">Знач...</div>
<div class="t" style="left:870px;top:298.89px;font-size:3.8px;line-height:4.56px;color:#707070;">Нет</div>
<div class="t" style="left:863px;top:304.39px;font-size:3.8px;line-height:4.56px;color:#707070;">элементов</div>
<!-- RIGHT END -->
<!-- status bar -->
<svg class="a" style="left:0;top:470px" width="890" height="20"><rect x="489" y="8.4" width="369" height="1.2" fill="#f2a86e"/><rect x="0" y="9.6" width="890" height="6.2" fill="#2b5aa0"/></svg>
<div class="t" style="left:2px;top:479.9px;font-size:4.15px;line-height:5px;color:#e8eef8">АК Создать обозначение осей</div>
<div class="t" style="left:407px;top:479.9px;font-size:4.15px;line-height:5px;color:#e8eef8">Выберите две линии изображения, задающие положение оси</div>
<div class="t" style="left:818px;top:479.9px;font-size:4.15px;line-height:5px;color:#e8eef8">X=114.3</div>
<div class="t" style="left:842px;top:479.9px;font-size:4.15px;line-height:5px;color:#e8eef8">Y=115.85</div>
<div class="a" style="left:0;top:486px;width:890px;height:14px;background:#f8f9f9"></div>
<!-- video circle -->
<!-- WOMAN START -->
<svg class="a" style="left:0;top:0" width="890" height="500"><defs><clipPath id="cc"><circle cx="781" cy="393.5" r="85"/></clipPath><radialGradient id="skin" cx="0.4" cy="0.45" r="0.75"><stop offset="0" stop-color="#f0d4a8"/><stop offset="0.7" stop-color="#e8c69c"/><stop offset="1" stop-color="#d8ae80"/></radialGradient><linearGradient id="hair" x1="0" x2="1" y1="0" y2="0"><stop offset="0" stop-color="#8e7248"/><stop offset="0.45" stop-color="#74603a"/><stop offset="1" stop-color="#58482c"/></linearGradient><linearGradient id="shirt" x1="0" x2="1" y1="0" y2="1"><stop offset="0" stop-color="#fffdf4"/><stop offset="1" stop-color="#f4efe4"/></linearGradient><linearGradient id="mic" x1="0" x2="1" y1="0" y2="0"><stop offset="0" stop-color="#3a4058"/><stop offset="1" stop-color="#22283a"/></linearGradient></defs><circle cx="781" cy="393.5" r="85" fill="#3a52b8"/><g clip-path="url(#cc)"><path d="M789,333 C772,333 760,342 755,356 C750,372 750,392 751,412 C752,428 754,445 758,458 C762,468 770,470 776,466 L800,445 L836,426 C834,410 830,395 828,378 C826,360 822,348 814,340 C806,334 798,332 789,333 Z" fill="url(#hair)"/><path d="M781,400 L805,398 L808,422 L828,423 C820,432 810,436 800,439 C795,450 792,460 790,470 L786,470 C783,455 780,442 777,430 L780,418 Z" fill="#d0a470"/><path d="M781,402 L805,399 L806,412 C798,416 788,416 781,412 Z" fill="#c09060"/><path d="M781,344 C771,345 764,352 761,364 C759,374 761,380 761,385 C762,389 765,391 766,394 C767,400 770,405 775,408 C782,411 792,408 798,401 C803,394 805,384 805,371 C805,356 796,344 781,344 Z" fill="url(#skin)"/><path d="M776,337 C794,335 808,344 811,360 C813,375 811,392 813,408 L818,422 L834,424 C830,404 828,380 825,362 C821,346 808,334 790,333 Z" fill="#5c4a2e"/><path d="M750,395 C754,410 760,425 764,440 C768,452 770,462 766,470 L752,468 C749,455 748,440 748,420 Z" fill="#8a6e46"/><ellipse cx="812.5" cy="378" rx="4.5" ry="8.5" fill="#dcb488"/><circle cx="807" cy="394" r="2" fill="#f6eedc" stroke="#c8a878" stroke-width="0.4"/><path d="M764,366 q6,-3 11,-1.5" stroke="#6a4a38" stroke-width="1" fill="none"/><path d="M778,364.5 q6,-3 12,0" stroke="#6a4a38" stroke-width="1" fill="none"/><path d="M766,372 q3,-1 6,0" stroke="#4a3428" stroke-width="0.8" fill="none"/><path d="M780,371 q3,-1.5 6,0" stroke="#4a3428" stroke-width="0.8" fill="none"/><ellipse cx="759.5" cy="373" rx="7.3" ry="7.3" fill="#f0f4f8" fill-opacity="0.3" stroke="#a89488" stroke-width="0.8"/><ellipse cx="777.5" cy="372" rx="8.3" ry="8" fill="#f0f4f8" fill-opacity="0.2" stroke="#a89488" stroke-width="0.8"/><line x1="785.8" y1="370" x2="809" y2="367.5" stroke="#8a786c" stroke-width="0.7"/><path d="M758,386 q2,2 4,1" stroke="#c89a80" stroke-width="0.6" fill="none"/><path d="M765.5,392.5 q6,-2.5 12.5,0.5 q-6,5.5 -12.5,-0.5 z" fill="#c77a7a"/><path d="M777,430 C780,442 784,456 788,472 L790,480 L730,480 C742,468 752,452 760,440 C765,434 771,430 777,430 Z" fill="url(#shirt)"/><path d="M828,423 C838,421 850,424 856,432 C862,442 866,458 868,480 L790,480 C792,466 795,452 800,440 C812,436 822,430 828,423 Z" fill="url(#shirt)"/><path d="M777,430 C781,444 785,458 789,472" stroke="#1e2a58" stroke-width="1.5" fill="none"/><path d="M828,422 C821,431 812,436 801,439.5 C796,450 793,461 790,472" stroke="#1e2a58" stroke-width="1.5" fill="none"/><path d="M796,436 C808,434 818,430 826,424" stroke="#f4f0ea" stroke-width="1.2" fill="none"/><path d="M786,440 q5,6 11,2" stroke="#c8a060" stroke-width="0.4" fill="none"/><path d="M703,424.5 L749,427 L749,431.5 L703,429.5 Z" fill="#263050"/><rect x="702" y="423" width="3.5" height="8" rx="1" fill="#1c2440"/><ellipse cx="727" cy="430" rx="5" ry="4.5" fill="#2a3456"/><g transform="translate(747.5,444) rotate(33)"><rect x="-8.8" y="-17" width="17.6" height="34" rx="2.5" fill="#1e2844"/><rect x="-8.8" y="-17" width="3" height="34" fill="#303a5c"/></g><text x="741" y="459" transform="rotate(-57 741 459)" font-family="Liberation Sans" font-size="2.8" fill="#c0c8dc">ZVUKNIK</text><g transform="translate(735,462) rotate(33)"><rect x="-5" y="0" width="10" height="6" fill="#d8d4cc"/></g><g transform="translate(761.5,419.5) rotate(33)"><rect x="-13" y="-11" width="26" height="22" rx="9" fill="#252b3e"/></g></g></svg>
<!-- WOMAN END -->
</div></body></html>
